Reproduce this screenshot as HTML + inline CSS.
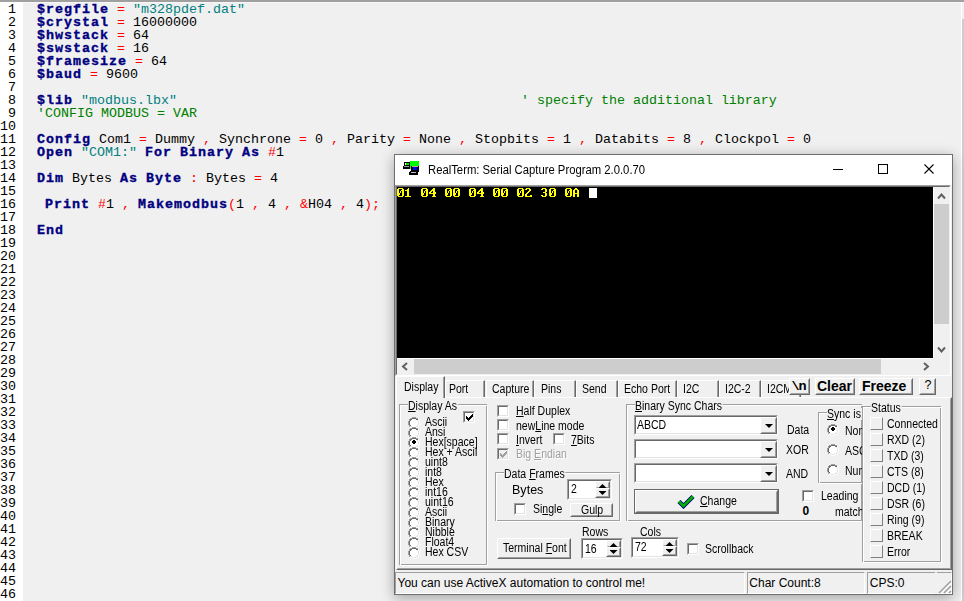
<!DOCTYPE html><html><head><meta charset="utf-8"><style>
*{margin:0;padding:0;box-sizing:border-box}
html,body{width:964px;height:601px;overflow:hidden;background:#f0f0f0;position:relative}
body>div{position:absolute}
.ln{left:0;width:16px;text-align:right;font:400 13.333px/13px 'Liberation Mono', monospace;color:#000;white-space:pre}
.cd{left:37px;font:400 13.333px/13px 'Liberation Mono', monospace;color:#000;white-space:pre}
.cd b{color:#000080;font-weight:700;letter-spacing:1px;-webkit-text-stroke:0.35px #000080}
.cd i{font-style:normal}
u{text-decoration:underline;text-underline-offset:1px}
.s{color:#008080} .c{color:#008000} .o{color:#ff0000}
</style></head><body>
<div style="left:0px;top:0px;width:964px;height:2px;background:#a0a0a0"></div>
<div style="left:0px;top:2px;width:964px;height:1px;background:#f7f7f7"></div>
<div style="left:0px;top:2px;width:23px;height:599px;background:#fff"></div>
<div style="left:961px;top:2px;width:1px;height:599px;background:#fff"></div>
<div style="left:962px;top:3px;width:2px;height:16px;background:#f0f0f0"></div>
<div style="left:962px;top:19px;width:2px;height:582px;background:#cdcdcd"></div>
<div class="ln" style="top:3px">1</div>
<div class="ln" style="top:16px">2</div>
<div class="ln" style="top:29px">3</div>
<div class="ln" style="top:42px">4</div>
<div class="ln" style="top:55px">5</div>
<div class="ln" style="top:68px">6</div>
<div class="ln" style="top:81px">7</div>
<div class="ln" style="top:94px">8</div>
<div class="ln" style="top:107px">9</div>
<div class="ln" style="top:120px">10</div>
<div class="ln" style="top:133px">11</div>
<div class="ln" style="top:146px">12</div>
<div class="ln" style="top:159px">13</div>
<div class="ln" style="top:172px">14</div>
<div class="ln" style="top:185px">15</div>
<div class="ln" style="top:198px">16</div>
<div class="ln" style="top:211px">17</div>
<div class="ln" style="top:224px">18</div>
<div class="ln" style="top:237px">19</div>
<div class="ln" style="top:250px">20</div>
<div class="ln" style="top:263px">21</div>
<div class="ln" style="top:276px">22</div>
<div class="ln" style="top:289px">23</div>
<div class="ln" style="top:302px">24</div>
<div class="ln" style="top:315px">25</div>
<div class="ln" style="top:328px">26</div>
<div class="ln" style="top:341px">27</div>
<div class="ln" style="top:354px">28</div>
<div class="ln" style="top:367px">29</div>
<div class="ln" style="top:380px">30</div>
<div class="ln" style="top:393px">31</div>
<div class="ln" style="top:406px">32</div>
<div class="ln" style="top:419px">33</div>
<div class="ln" style="top:432px">34</div>
<div class="ln" style="top:445px">35</div>
<div class="ln" style="top:458px">36</div>
<div class="ln" style="top:471px">37</div>
<div class="ln" style="top:484px">38</div>
<div class="ln" style="top:497px">39</div>
<div class="ln" style="top:510px">40</div>
<div class="ln" style="top:523px">41</div>
<div class="ln" style="top:536px">42</div>
<div class="ln" style="top:549px">43</div>
<div class="ln" style="top:562px">44</div>
<div class="ln" style="top:575px">45</div>
<div class="ln" style="top:588px">46</div>
<div class="cd" style="top:3px"><b>$regfile</b> <i class="o">=</i> <i class="s">"m328pdef.dat"</i></div>
<div class="cd" style="top:16px"><b>$crystal</b> <i class="o">=</i> 16000000</div>
<div class="cd" style="top:29px"><b>$hwstack</b> <i class="o">=</i> 64</div>
<div class="cd" style="top:42px"><b>$swstack</b> <i class="o">=</i> 16</div>
<div class="cd" style="top:55px"><b>$framesize</b> <i class="o">=</i> 64</div>
<div class="cd" style="top:68px"><b>$baud</b> <i class="o">=</i> 9600</div>
<div class="cd" style="top:94px"><b>$lib</b> <i class="s">"modbus.lbx"</i>                                           <i class="c">' specify the additional library</i></div>
<div class="cd" style="top:107px"><i class="c">'CONFIG MODBUS = VAR</i></div>
<div class="cd" style="top:133px"><b>Config</b> Com1 <i class="o">=</i> Dummy <i class="o">,</i> Synchrone <i class="o">=</i> 0 <i class="o">,</i> Parity <i class="o">=</i> None <i class="o">,</i> Stopbits <i class="o">=</i> 1 <i class="o">,</i> Databits <i class="o">=</i> 8 <i class="o">,</i> Clockpol <i class="o">=</i> 0</div>
<div class="cd" style="top:146px"><b>Open</b> <i class="s">"COM1:"</i> <b>For</b> <b>Binary</b> <b>As</b> <i class="o">#</i>1</div>
<div class="cd" style="top:172px"><b>Dim</b> Bytes <b>As</b> <b>Byte</b> <i class="o">:</i> Bytes <i class="o">=</i> 4</div>
<div class="cd" style="top:198px"> <b>Print</b> <i class="o">#</i>1 <i class="o">,</i> <b>Makemodbus</b><i class="o">(</i>1 <i class="o">,</i> 4 <i class="o">,</i> <i class="o">&amp;</i>H04 <i class="o">,</i> 4<i class="o">);</i></div>
<div class="cd" style="top:224px"><b>End</b></div>
<div style="left:394px;top:154px;width:559px;height:441px;border:1px solid #6f6f6f;background:#f0f0f0;box-shadow:0 3px 13px rgba(0,0,0,.33)"></div>
<div style="left:395px;top:155px;width:557px;height:30px;background:#fff"></div>
<svg style="position:absolute;left:401px;top:159px;shape-rendering:crispEdges" width="20" height="18" viewBox="0 0 20 18"><rect x="3" y="3" width="6" height="4" fill="#000"/><rect x="2" y="7" width="7" height="3" fill="#000"/><rect x="4" y="4" width="1" height="2" fill="#fff"/><rect x="5" y="4" width="3" height="2" fill="#00e000"/><rect x="3" y="7" width="5" height="1" fill="#a0a0a0"/><rect x="9" y="2" width="9" height="5" fill="#00ff00"/><rect x="9" y="7" width="1" height="3" fill="#00ff00"/><rect x="10" y="7" width="8" height="6" fill="#000"/><rect x="11" y="7" width="6" height="1" fill="#c0a0a0"/><rect x="12" y="8" width="4" height="3" fill="#0000ff"/><rect x="8" y="13" width="9" height="3" fill="#000"/><rect x="9" y="12" width="8" height="1" fill="#000"/><rect x="10" y="13" width="5" height="1" fill="#c0c0c0"/></svg>
<div style="left:427.8px;top:163.97px;font:400 12.5px/12.5px 'Liberation Sans', sans-serif;color:#000;white-space:pre;transform:scaleX(0.903);transform-origin:0 0">RealTerm: Serial Capture Program 2.0.0.70</div>
<div style="left:833px;top:169px;width:10px;height:1px;background:#000"></div>
<div style="left:878px;top:164px;width:10px;height:10px;border:1px solid #000"></div>
<svg style="position:absolute;left:924px;top:164px;" width="10" height="10" viewBox="0 0 10 10"><path d="M0.5 0.5L9.5 9.5M9.5 0.5L0.5 9.5" stroke="#000" stroke-width="1.1"/></svg>
<div style="left:395px;top:185px;width:556px;height:191px;border-style:solid;border-width:1px;border-color:#a0a0a0 #fff #fff #a0a0a0"></div>
<div style="left:396px;top:186px;width:554px;height:189px;border-style:solid;border-width:1px;border-color:#696969 #f0f0f0 #f0f0f0 #696969"></div>
<div style="left:397px;top:187px;width:536px;height:171px;background:#000"></div>
<div style="left:933px;top:187px;width:1px;height:171px;background:#fff"></div>
<div style="left:934px;top:204px;width:15px;height:120px;background:#cdcdcd"></div>
<svg style="position:absolute;left:937px;top:192px;" width="9" height="8" viewBox="0 0 9 8"><path d="M1 6.5L4.5 2.5L8 6.5" fill="none" stroke="#606060" stroke-width="2"/></svg>
<svg style="position:absolute;left:937px;top:346px;" width="9" height="8" viewBox="0 0 9 8"><path d="M1 1.5L4.5 5.5L8 1.5" fill="none" stroke="#606060" stroke-width="2"/></svg>
<div style="left:397px;top:358px;width:536px;height:1px;background:#fff"></div>
<div style="left:414px;top:359px;width:467px;height:15px;background:#cdcdcd"></div>
<svg style="position:absolute;left:401px;top:362px;" width="8" height="9" viewBox="0 0 8 9"><path d="M6 1L2 4.5L6 8" fill="none" stroke="#606060" stroke-width="2"/></svg>
<svg style="position:absolute;left:922px;top:362px;" width="8" height="9" viewBox="0 0 8 9"><path d="M2 1L6 4.5L2 8" fill="none" stroke="#606060" stroke-width="2"/></svg>
<svg style="position:absolute;left:397px;top:188px;shape-rendering:crispEdges" width="184" height="9" viewBox="0 0 184 9"><g transform="translate(0,0)"><rect x="1" y="0" width="5" height="1" fill="#ffff00"/><rect x="0" y="1" width="2" height="1" fill="#ffff00"/><rect x="5" y="1" width="2" height="1" fill="#ffff00"/><rect x="0" y="2" width="2" height="1" fill="#ffff00"/><rect x="4" y="2" width="3" height="1" fill="#ffff00"/><rect x="0" y="3" width="2" height="1" fill="#ffff00"/><rect x="3" y="3" width="1" height="1" fill="#ffff00"/><rect x="5" y="3" width="2" height="1" fill="#ffff00"/><rect x="0" y="4" width="2" height="1" fill="#ffff00"/><rect x="3" y="4" width="1" height="1" fill="#ffff00"/><rect x="5" y="4" width="2" height="1" fill="#ffff00"/><rect x="0" y="5" width="3" height="1" fill="#ffff00"/><rect x="5" y="5" width="2" height="1" fill="#ffff00"/><rect x="0" y="6" width="3" height="1" fill="#ffff00"/><rect x="5" y="6" width="2" height="1" fill="#ffff00"/><rect x="0" y="7" width="2" height="1" fill="#ffff00"/><rect x="5" y="7" width="2" height="1" fill="#ffff00"/><rect x="1" y="8" width="5" height="1" fill="#ffff00"/></g><g transform="translate(8,0)"><rect x="3" y="0" width="1" height="1" fill="#ffff00"/><rect x="2" y="1" width="2" height="1" fill="#ffff00"/><rect x="0" y="2" width="4" height="1" fill="#ffff00"/><rect x="2" y="3" width="2" height="1" fill="#ffff00"/><rect x="2" y="4" width="2" height="1" fill="#ffff00"/><rect x="2" y="5" width="2" height="1" fill="#ffff00"/><rect x="2" y="6" width="2" height="1" fill="#ffff00"/><rect x="2" y="7" width="2" height="1" fill="#ffff00"/><rect x="0" y="8" width="6" height="1" fill="#ffff00"/></g><g transform="translate(24,0)"><rect x="1" y="0" width="5" height="1" fill="#ffff00"/><rect x="0" y="1" width="2" height="1" fill="#ffff00"/><rect x="5" y="1" width="2" height="1" fill="#ffff00"/><rect x="0" y="2" width="2" height="1" fill="#ffff00"/><rect x="4" y="2" width="3" height="1" fill="#ffff00"/><rect x="0" y="3" width="2" height="1" fill="#ffff00"/><rect x="3" y="3" width="1" height="1" fill="#ffff00"/><rect x="5" y="3" width="2" height="1" fill="#ffff00"/><rect x="0" y="4" width="2" height="1" fill="#ffff00"/><rect x="3" y="4" width="1" height="1" fill="#ffff00"/><rect x="5" y="4" width="2" height="1" fill="#ffff00"/><rect x="0" y="5" width="3" height="1" fill="#ffff00"/><rect x="5" y="5" width="2" height="1" fill="#ffff00"/><rect x="0" y="6" width="3" height="1" fill="#ffff00"/><rect x="5" y="6" width="2" height="1" fill="#ffff00"/><rect x="0" y="7" width="2" height="1" fill="#ffff00"/><rect x="5" y="7" width="2" height="1" fill="#ffff00"/><rect x="1" y="8" width="5" height="1" fill="#ffff00"/></g><g transform="translate(32,0)"><rect x="4" y="0" width="2" height="1" fill="#ffff00"/><rect x="3" y="1" width="3" height="1" fill="#ffff00"/><rect x="2" y="2" width="4" height="1" fill="#ffff00"/><rect x="1" y="3" width="2" height="1" fill="#ffff00"/><rect x="4" y="3" width="2" height="1" fill="#ffff00"/><rect x="0" y="4" width="2" height="1" fill="#ffff00"/><rect x="4" y="4" width="3" height="1" fill="#ffff00"/><rect x="0" y="5" width="7" height="1" fill="#ffff00"/><rect x="4" y="6" width="2" height="1" fill="#ffff00"/><rect x="4" y="7" width="2" height="1" fill="#ffff00"/><rect x="3" y="8" width="4" height="1" fill="#ffff00"/></g><g transform="translate(48,0)"><rect x="1" y="0" width="5" height="1" fill="#ffff00"/><rect x="0" y="1" width="2" height="1" fill="#ffff00"/><rect x="5" y="1" width="2" height="1" fill="#ffff00"/><rect x="0" y="2" width="2" height="1" fill="#ffff00"/><rect x="4" y="2" width="3" height="1" fill="#ffff00"/><rect x="0" y="3" width="2" height="1" fill="#ffff00"/><rect x="3" y="3" width="1" height="1" fill="#ffff00"/><rect x="5" y="3" width="2" height="1" fill="#ffff00"/><rect x="0" y="4" width="2" height="1" fill="#ffff00"/><rect x="3" y="4" width="1" height="1" fill="#ffff00"/><rect x="5" y="4" width="2" height="1" fill="#ffff00"/><rect x="0" y="5" width="3" height="1" fill="#ffff00"/><rect x="5" y="5" width="2" height="1" fill="#ffff00"/><rect x="0" y="6" width="3" height="1" fill="#ffff00"/><rect x="5" y="6" width="2" height="1" fill="#ffff00"/><rect x="0" y="7" width="2" height="1" fill="#ffff00"/><rect x="5" y="7" width="2" height="1" fill="#ffff00"/><rect x="1" y="8" width="5" height="1" fill="#ffff00"/></g><g transform="translate(56,0)"><rect x="1" y="0" width="5" height="1" fill="#ffff00"/><rect x="0" y="1" width="2" height="1" fill="#ffff00"/><rect x="5" y="1" width="2" height="1" fill="#ffff00"/><rect x="0" y="2" width="2" height="1" fill="#ffff00"/><rect x="4" y="2" width="3" height="1" fill="#ffff00"/><rect x="0" y="3" width="2" height="1" fill="#ffff00"/><rect x="3" y="3" width="1" height="1" fill="#ffff00"/><rect x="5" y="3" width="2" height="1" fill="#ffff00"/><rect x="0" y="4" width="2" height="1" fill="#ffff00"/><rect x="3" y="4" width="1" height="1" fill="#ffff00"/><rect x="5" y="4" width="2" height="1" fill="#ffff00"/><rect x="0" y="5" width="3" height="1" fill="#ffff00"/><rect x="5" y="5" width="2" height="1" fill="#ffff00"/><rect x="0" y="6" width="3" height="1" fill="#ffff00"/><rect x="5" y="6" width="2" height="1" fill="#ffff00"/><rect x="0" y="7" width="2" height="1" fill="#ffff00"/><rect x="5" y="7" width="2" height="1" fill="#ffff00"/><rect x="1" y="8" width="5" height="1" fill="#ffff00"/></g><g transform="translate(72,0)"><rect x="1" y="0" width="5" height="1" fill="#ffff00"/><rect x="0" y="1" width="2" height="1" fill="#ffff00"/><rect x="5" y="1" width="2" height="1" fill="#ffff00"/><rect x="0" y="2" width="2" height="1" fill="#ffff00"/><rect x="4" y="2" width="3" height="1" fill="#ffff00"/><rect x="0" y="3" width="2" height="1" fill="#ffff00"/><rect x="3" y="3" width="1" height="1" fill="#ffff00"/><rect x="5" y="3" width="2" height="1" fill="#ffff00"/><rect x="0" y="4" width="2" height="1" fill="#ffff00"/><rect x="3" y="4" width="1" height="1" fill="#ffff00"/><rect x="5" y="4" width="2" height="1" fill="#ffff00"/><rect x="0" y="5" width="3" height="1" fill="#ffff00"/><rect x="5" y="5" width="2" height="1" fill="#ffff00"/><rect x="0" y="6" width="3" height="1" fill="#ffff00"/><rect x="5" y="6" width="2" height="1" fill="#ffff00"/><rect x="0" y="7" width="2" height="1" fill="#ffff00"/><rect x="5" y="7" width="2" height="1" fill="#ffff00"/><rect x="1" y="8" width="5" height="1" fill="#ffff00"/></g><g transform="translate(80,0)"><rect x="4" y="0" width="2" height="1" fill="#ffff00"/><rect x="3" y="1" width="3" height="1" fill="#ffff00"/><rect x="2" y="2" width="4" height="1" fill="#ffff00"/><rect x="1" y="3" width="2" height="1" fill="#ffff00"/><rect x="4" y="3" width="2" height="1" fill="#ffff00"/><rect x="0" y="4" width="2" height="1" fill="#ffff00"/><rect x="4" y="4" width="3" height="1" fill="#ffff00"/><rect x="0" y="5" width="7" height="1" fill="#ffff00"/><rect x="4" y="6" width="2" height="1" fill="#ffff00"/><rect x="4" y="7" width="2" height="1" fill="#ffff00"/><rect x="3" y="8" width="4" height="1" fill="#ffff00"/></g><g transform="translate(96,0)"><rect x="1" y="0" width="5" height="1" fill="#ffff00"/><rect x="0" y="1" width="2" height="1" fill="#ffff00"/><rect x="5" y="1" width="2" height="1" fill="#ffff00"/><rect x="0" y="2" width="2" height="1" fill="#ffff00"/><rect x="4" y="2" width="3" height="1" fill="#ffff00"/><rect x="0" y="3" width="2" height="1" fill="#ffff00"/><rect x="3" y="3" width="1" height="1" fill="#ffff00"/><rect x="5" y="3" width="2" height="1" fill="#ffff00"/><rect x="0" y="4" width="2" height="1" fill="#ffff00"/><rect x="3" y="4" width="1" height="1" fill="#ffff00"/><rect x="5" y="4" width="2" height="1" fill="#ffff00"/><rect x="0" y="5" width="3" height="1" fill="#ffff00"/><rect x="5" y="5" width="2" height="1" fill="#ffff00"/><rect x="0" y="6" width="3" height="1" fill="#ffff00"/><rect x="5" y="6" width="2" height="1" fill="#ffff00"/><rect x="0" y="7" width="2" height="1" fill="#ffff00"/><rect x="5" y="7" width="2" height="1" fill="#ffff00"/><rect x="1" y="8" width="5" height="1" fill="#ffff00"/></g><g transform="translate(104,0)"><rect x="1" y="0" width="5" height="1" fill="#ffff00"/><rect x="0" y="1" width="2" height="1" fill="#ffff00"/><rect x="5" y="1" width="2" height="1" fill="#ffff00"/><rect x="0" y="2" width="2" height="1" fill="#ffff00"/><rect x="4" y="2" width="3" height="1" fill="#ffff00"/><rect x="0" y="3" width="2" height="1" fill="#ffff00"/><rect x="3" y="3" width="1" height="1" fill="#ffff00"/><rect x="5" y="3" width="2" height="1" fill="#ffff00"/><rect x="0" y="4" width="2" height="1" fill="#ffff00"/><rect x="3" y="4" width="1" height="1" fill="#ffff00"/><rect x="5" y="4" width="2" height="1" fill="#ffff00"/><rect x="0" y="5" width="3" height="1" fill="#ffff00"/><rect x="5" y="5" width="2" height="1" fill="#ffff00"/><rect x="0" y="6" width="3" height="1" fill="#ffff00"/><rect x="5" y="6" width="2" height="1" fill="#ffff00"/><rect x="0" y="7" width="2" height="1" fill="#ffff00"/><rect x="5" y="7" width="2" height="1" fill="#ffff00"/><rect x="1" y="8" width="5" height="1" fill="#ffff00"/></g><g transform="translate(120,0)"><rect x="1" y="0" width="5" height="1" fill="#ffff00"/><rect x="0" y="1" width="2" height="1" fill="#ffff00"/><rect x="5" y="1" width="2" height="1" fill="#ffff00"/><rect x="0" y="2" width="2" height="1" fill="#ffff00"/><rect x="4" y="2" width="3" height="1" fill="#ffff00"/><rect x="0" y="3" width="2" height="1" fill="#ffff00"/><rect x="3" y="3" width="1" height="1" fill="#ffff00"/><rect x="5" y="3" width="2" height="1" fill="#ffff00"/><rect x="0" y="4" width="2" height="1" fill="#ffff00"/><rect x="3" y="4" width="1" height="1" fill="#ffff00"/><rect x="5" y="4" width="2" height="1" fill="#ffff00"/><rect x="0" y="5" width="3" height="1" fill="#ffff00"/><rect x="5" y="5" width="2" height="1" fill="#ffff00"/><rect x="0" y="6" width="3" height="1" fill="#ffff00"/><rect x="5" y="6" width="2" height="1" fill="#ffff00"/><rect x="0" y="7" width="2" height="1" fill="#ffff00"/><rect x="5" y="7" width="2" height="1" fill="#ffff00"/><rect x="1" y="8" width="5" height="1" fill="#ffff00"/></g><g transform="translate(128,0)"><rect x="1" y="0" width="4" height="1" fill="#ffff00"/><rect x="0" y="1" width="2" height="1" fill="#ffff00"/><rect x="4" y="1" width="2" height="1" fill="#ffff00"/><rect x="4" y="2" width="2" height="1" fill="#ffff00"/><rect x="3" y="3" width="2" height="1" fill="#ffff00"/><rect x="2" y="4" width="2" height="1" fill="#ffff00"/><rect x="1" y="5" width="2" height="1" fill="#ffff00"/><rect x="0" y="6" width="2" height="1" fill="#ffff00"/><rect x="0" y="7" width="2" height="1" fill="#ffff00"/><rect x="5" y="7" width="2" height="1" fill="#ffff00"/><rect x="0" y="8" width="7" height="1" fill="#ffff00"/></g><g transform="translate(144,0)"><rect x="1" y="0" width="4" height="1" fill="#ffff00"/><rect x="0" y="1" width="2" height="1" fill="#ffff00"/><rect x="4" y="1" width="2" height="1" fill="#ffff00"/><rect x="4" y="2" width="2" height="1" fill="#ffff00"/><rect x="4" y="3" width="2" height="1" fill="#ffff00"/><rect x="2" y="4" width="3" height="1" fill="#ffff00"/><rect x="4" y="5" width="2" height="1" fill="#ffff00"/><rect x="4" y="6" width="2" height="1" fill="#ffff00"/><rect x="0" y="7" width="2" height="1" fill="#ffff00"/><rect x="4" y="7" width="2" height="1" fill="#ffff00"/><rect x="1" y="8" width="4" height="1" fill="#ffff00"/></g><g transform="translate(152,0)"><rect x="1" y="0" width="5" height="1" fill="#ffff00"/><rect x="0" y="1" width="2" height="1" fill="#ffff00"/><rect x="5" y="1" width="2" height="1" fill="#ffff00"/><rect x="0" y="2" width="2" height="1" fill="#ffff00"/><rect x="4" y="2" width="3" height="1" fill="#ffff00"/><rect x="0" y="3" width="2" height="1" fill="#ffff00"/><rect x="3" y="3" width="1" height="1" fill="#ffff00"/><rect x="5" y="3" width="2" height="1" fill="#ffff00"/><rect x="0" y="4" width="2" height="1" fill="#ffff00"/><rect x="3" y="4" width="1" height="1" fill="#ffff00"/><rect x="5" y="4" width="2" height="1" fill="#ffff00"/><rect x="0" y="5" width="3" height="1" fill="#ffff00"/><rect x="5" y="5" width="2" height="1" fill="#ffff00"/><rect x="0" y="6" width="3" height="1" fill="#ffff00"/><rect x="5" y="6" width="2" height="1" fill="#ffff00"/><rect x="0" y="7" width="2" height="1" fill="#ffff00"/><rect x="5" y="7" width="2" height="1" fill="#ffff00"/><rect x="1" y="8" width="5" height="1" fill="#ffff00"/></g><g transform="translate(168,0)"><rect x="1" y="0" width="5" height="1" fill="#ffff00"/><rect x="0" y="1" width="2" height="1" fill="#ffff00"/><rect x="5" y="1" width="2" height="1" fill="#ffff00"/><rect x="0" y="2" width="2" height="1" fill="#ffff00"/><rect x="4" y="2" width="3" height="1" fill="#ffff00"/><rect x="0" y="3" width="2" height="1" fill="#ffff00"/><rect x="3" y="3" width="1" height="1" fill="#ffff00"/><rect x="5" y="3" width="2" height="1" fill="#ffff00"/><rect x="0" y="4" width="2" height="1" fill="#ffff00"/><rect x="3" y="4" width="1" height="1" fill="#ffff00"/><rect x="5" y="4" width="2" height="1" fill="#ffff00"/><rect x="0" y="5" width="3" height="1" fill="#ffff00"/><rect x="5" y="5" width="2" height="1" fill="#ffff00"/><rect x="0" y="6" width="3" height="1" fill="#ffff00"/><rect x="5" y="6" width="2" height="1" fill="#ffff00"/><rect x="0" y="7" width="2" height="1" fill="#ffff00"/><rect x="5" y="7" width="2" height="1" fill="#ffff00"/><rect x="1" y="8" width="5" height="1" fill="#ffff00"/></g><g transform="translate(176,0)"><rect x="2" y="0" width="2" height="1" fill="#ffff00"/><rect x="1" y="1" width="4" height="1" fill="#ffff00"/><rect x="0" y="2" width="2" height="1" fill="#ffff00"/><rect x="4" y="2" width="2" height="1" fill="#ffff00"/><rect x="0" y="3" width="2" height="1" fill="#ffff00"/><rect x="4" y="3" width="2" height="1" fill="#ffff00"/><rect x="0" y="4" width="2" height="1" fill="#ffff00"/><rect x="4" y="4" width="2" height="1" fill="#ffff00"/><rect x="0" y="5" width="6" height="1" fill="#ffff00"/><rect x="0" y="6" width="2" height="1" fill="#ffff00"/><rect x="4" y="6" width="2" height="1" fill="#ffff00"/><rect x="0" y="7" width="2" height="1" fill="#ffff00"/><rect x="4" y="7" width="2" height="1" fill="#ffff00"/><rect x="0" y="8" width="2" height="1" fill="#ffff00"/><rect x="4" y="8" width="2" height="1" fill="#ffff00"/></g></svg>
<div style="left:589px;top:188px;width:8px;height:10px;background:#fff"></div>
<div style="left:396px;top:397px;width:556px;height:173px;border-style:solid;border-width:1px;border-color:#fff #696969 #696969 #fff"></div>
<div style="left:397px;top:398px;width:554px;height:171px;border-style:solid;border-width:1px;border-color:#f0f0f0 #a0a0a0 #a0a0a0 #f0f0f0"></div>
<div style="left:445px;top:380px;width:40px;height:17px;background:#f0f0f0;border-style:solid;border-width:1px 1px 0 1px;border-color:#fff #696969 #fff #fff"></div>
<div style="left:483px;top:381px;width:1px;height:16px;background:#a0a0a0"></div>
<div style="left:449.4px;top:383.44px;font:400 12px/12px 'Liberation Sans', sans-serif;color:#000;white-space:pre;transform:scaleX(0.876);transform-origin:0 0;">Port</div>
<div style="left:486px;top:380px;width:48px;height:17px;background:#f0f0f0;border-style:solid;border-width:1px 1px 0 1px;border-color:#fff #696969 #fff #fff"></div>
<div style="left:532px;top:381px;width:1px;height:16px;background:#a0a0a0"></div>
<div style="left:491.6px;top:383.44px;font:400 12px/12px 'Liberation Sans', sans-serif;color:#000;white-space:pre;transform:scaleX(0.876);transform-origin:0 0;">Capture</div>
<div style="left:534px;top:380px;width:42px;height:17px;background:#f0f0f0;border-style:solid;border-width:1px 1px 0 1px;border-color:#fff #696969 #fff #fff"></div>
<div style="left:574px;top:381px;width:1px;height:16px;background:#a0a0a0"></div>
<div style="left:540.7px;top:383.44px;font:400 12px/12px 'Liberation Sans', sans-serif;color:#000;white-space:pre;transform:scaleX(0.876);transform-origin:0 0;">Pins</div>
<div style="left:576px;top:380px;width:42px;height:17px;background:#f0f0f0;border-style:solid;border-width:1px 1px 0 1px;border-color:#fff #696969 #fff #fff"></div>
<div style="left:616px;top:381px;width:1px;height:16px;background:#a0a0a0"></div>
<div style="left:582.4px;top:383.44px;font:400 12px/12px 'Liberation Sans', sans-serif;color:#000;white-space:pre;transform:scaleX(0.876);transform-origin:0 0;">Send</div>
<div style="left:618px;top:380px;width:59px;height:17px;background:#f0f0f0;border-style:solid;border-width:1px 1px 0 1px;border-color:#fff #696969 #fff #fff"></div>
<div style="left:675px;top:381px;width:1px;height:16px;background:#a0a0a0"></div>
<div style="left:624px;top:383.44px;font:400 12px/12px 'Liberation Sans', sans-serif;color:#000;white-space:pre;transform:scaleX(0.876);transform-origin:0 0;">Echo Port</div>
<div style="left:677px;top:380px;width:42px;height:17px;background:#f0f0f0;border-style:solid;border-width:1px 1px 0 1px;border-color:#fff #696969 #fff #fff"></div>
<div style="left:717px;top:381px;width:1px;height:16px;background:#a0a0a0"></div>
<div style="left:683px;top:383.44px;font:400 12px/12px 'Liberation Sans', sans-serif;color:#000;white-space:pre;transform:scaleX(0.876);transform-origin:0 0;">I2C</div>
<div style="left:719px;top:380px;width:42px;height:17px;background:#f0f0f0;border-style:solid;border-width:1px 1px 0 1px;border-color:#fff #696969 #fff #fff"></div>
<div style="left:759px;top:381px;width:1px;height:16px;background:#a0a0a0"></div>
<div style="left:724.8px;top:383.44px;font:400 12px/12px 'Liberation Sans', sans-serif;color:#000;white-space:pre;transform:scaleX(0.876);transform-origin:0 0;">I2C-2</div>
<div style="left:761px;top:380px;width:40px;height:17px;background:#f0f0f0;border-style:solid;border-width:1px 1px 0 1px;border-color:#fff #696969 #fff #fff"></div>
<div style="left:799px;top:381px;width:1px;height:16px;background:#a0a0a0"></div>
<div style="left:767.3px;top:383.44px;font:400 12px/12px 'Liberation Sans', sans-serif;color:#000;white-space:pre;transform:scaleX(0.876);transform-origin:0 0;">I2CMisc</div>
<div style="left:396px;top:376px;width:49px;height:22px;background:#f0f0f0;border-style:solid;border-width:1px 1px 0 1px;border-color:#fff #696969 #fff #fff"></div>
<div style="left:443px;top:377px;width:1px;height:21px;background:#a0a0a0"></div>
<div style="left:403.5px;top:381.44px;font:400 12px/12px 'Liberation Sans', sans-serif;color:#000;white-space:pre;transform:scaleX(0.876);transform-origin:0 0;">Display</div>
<div style="left:789px;top:378px;width:21px;height:17px;background:#f0f0f0;border-style:solid;border-width:1px;border-color:#fff #696969 #696969 #fff"></div>
<div style="left:790px;top:379px;width:19px;height:15px;border-style:solid;border-width:1px;border-color:#f0f0f0 #a0a0a0 #a0a0a0 #f0f0f0"></div>
<div style="left:791.5px;top:378px;font:700 13.5px/17px 'Liberation Mono', monospace;letter-spacing:-1px;white-space:pre">\n</div>
<div style="left:815px;top:378px;width:40px;height:17px;background:#f0f0f0;border-style:solid;border-width:1px;border-color:#fff #696969 #696969 #fff"></div>
<div style="left:816px;top:379px;width:38px;height:15px;border-style:solid;border-width:1px;border-color:#f0f0f0 #a0a0a0 #a0a0a0 #f0f0f0"></div>
<div style="left:817px;top:379.18px;font:700 14px/14px 'Liberation Sans', sans-serif;color:#000;white-space:pre;">Clear</div>
<div style="left:859px;top:378px;width:54px;height:17px;background:#f0f0f0;border-style:solid;border-width:1px;border-color:#fff #696969 #696969 #fff"></div>
<div style="left:860px;top:379px;width:52px;height:15px;border-style:solid;border-width:1px;border-color:#f0f0f0 #a0a0a0 #a0a0a0 #f0f0f0"></div>
<div style="left:862px;top:379.18px;font:700 14px/14px 'Liberation Sans', sans-serif;color:#000;white-space:pre;">Freeze</div>
<div style="left:919px;top:378px;width:17px;height:17px;background:#f0f0f0;border-style:solid;border-width:1px;border-color:#fff #696969 #696969 #fff"></div>
<div style="left:920px;top:379px;width:15px;height:15px;border-style:solid;border-width:1px;border-color:#f0f0f0 #a0a0a0 #a0a0a0 #f0f0f0"></div>
<div style="left:924.5px;top:379.38px;font:400 12.5px/12.5px 'Liberation Sans', sans-serif;color:#000;white-space:pre;">?</div>
<div style="left:399px;top:404px;width:88px;height:161px;border:1px solid #a0a0a0"></div>
<div style="left:400px;top:405px;width:88px;height:161px;border:1px solid #fff"></div>
<div style="left:407.5px;top:400.44px;font:400 12px/12px 'Liberation Sans', sans-serif;color:#000;white-space:pre;transform:scaleX(0.876);transform-origin:0 0;background:#f0f0f0;padding:0 1px 0 0"><u>D</u>isplay As</div>
<div style="left:463px;top:411px;width:12px;height:12px;background:#fff;border-style:solid;border-width:1px;border-color:#a0a0a0 #fff #fff #a0a0a0"></div>
<div style="left:464px;top:412px;width:10px;height:10px;border-style:solid;border-width:1px;border-color:#696969 #e3e3e3 #e3e3e3 #696969"></div>
<svg style="position:absolute;left:466px;top:414px;shape-rendering:crispEdges" width="7" height="7" viewBox="0 0 7 7"><rect x="6" y="0" width="1" height="1" fill="#000"/><rect x="5" y="1" width="2" height="1" fill="#000"/><rect x="0" y="2" width="1" height="1" fill="#000"/><rect x="4" y="2" width="3" height="1" fill="#000"/><rect x="0" y="3" width="2" height="1" fill="#000"/><rect x="3" y="3" width="3" height="1" fill="#000"/><rect x="0" y="4" width="5" height="1" fill="#000"/><rect x="1" y="5" width="3" height="1" fill="#000"/><rect x="2" y="6" width="1" height="1" fill="#000"/></svg>
<svg style="position:absolute;left:408px;top:417px;shape-rendering:crispEdges" width="12" height="12" viewBox="0 0 12 12"><rect x="4" y="2" width="4" height="1" fill="#fff"/><rect x="3" y="3" width="6" height="1" fill="#fff"/><rect x="2" y="4" width="8" height="1" fill="#fff"/><rect x="2" y="5" width="8" height="1" fill="#fff"/><rect x="2" y="6" width="8" height="1" fill="#fff"/><rect x="2" y="7" width="8" height="1" fill="#fff"/><rect x="3" y="8" width="6" height="1" fill="#fff"/><rect x="4" y="9" width="4" height="1" fill="#fff"/><rect x="4" y="0" width="4" height="1" fill="#a0a0a0"/><rect x="2" y="1" width="2" height="1" fill="#a0a0a0"/><rect x="8" y="1" width="2" height="1" fill="#a0a0a0"/><rect x="1" y="2" width="1" height="1" fill="#a0a0a0"/><rect x="1" y="3" width="1" height="1" fill="#a0a0a0"/><rect x="0" y="4" width="1" height="1" fill="#a0a0a0"/><rect x="0" y="5" width="1" height="1" fill="#a0a0a0"/><rect x="0" y="6" width="1" height="1" fill="#a0a0a0"/><rect x="0" y="7" width="1" height="1" fill="#a0a0a0"/><rect x="1" y="8" width="1" height="1" fill="#a0a0a0"/><rect x="1" y="9" width="1" height="1" fill="#a0a0a0"/><rect x="4" y="1" width="4" height="1" fill="#696969"/><rect x="2" y="2" width="2" height="1" fill="#696969"/><rect x="8" y="2" width="2" height="1" fill="#696969"/><rect x="2" y="3" width="1" height="1" fill="#696969"/><rect x="1" y="4" width="1" height="1" fill="#696969"/><rect x="1" y="5" width="1" height="1" fill="#696969"/><rect x="1" y="6" width="1" height="1" fill="#696969"/><rect x="1" y="7" width="1" height="1" fill="#696969"/><rect x="2" y="8" width="1" height="1" fill="#696969"/><rect x="10" y="2" width="1" height="1" fill="#fff"/><rect x="10" y="3" width="1" height="1" fill="#fff"/><rect x="11" y="4" width="1" height="1" fill="#fff"/><rect x="11" y="5" width="1" height="1" fill="#fff"/><rect x="11" y="6" width="1" height="1" fill="#fff"/><rect x="11" y="7" width="1" height="1" fill="#fff"/><rect x="10" y="8" width="1" height="1" fill="#fff"/><rect x="10" y="9" width="1" height="1" fill="#fff"/><rect x="2" y="10" width="2" height="1" fill="#fff"/><rect x="8" y="10" width="2" height="1" fill="#fff"/><rect x="4" y="11" width="4" height="1" fill="#fff"/><rect x="9" y="3" width="1" height="1" fill="#e3e3e3"/><rect x="10" y="4" width="1" height="1" fill="#e3e3e3"/><rect x="10" y="5" width="1" height="1" fill="#e3e3e3"/><rect x="10" y="6" width="1" height="1" fill="#e3e3e3"/><rect x="10" y="7" width="1" height="1" fill="#e3e3e3"/><rect x="9" y="8" width="1" height="1" fill="#e3e3e3"/><rect x="2" y="9" width="2" height="1" fill="#e3e3e3"/><rect x="8" y="9" width="2" height="1" fill="#e3e3e3"/><rect x="4" y="10" width="4" height="1" fill="#e3e3e3"/></svg>
<svg style="position:absolute;left:408px;top:427px;shape-rendering:crispEdges" width="12" height="12" viewBox="0 0 12 12"><rect x="4" y="2" width="4" height="1" fill="#fff"/><rect x="3" y="3" width="6" height="1" fill="#fff"/><rect x="2" y="4" width="8" height="1" fill="#fff"/><rect x="2" y="5" width="8" height="1" fill="#fff"/><rect x="2" y="6" width="8" height="1" fill="#fff"/><rect x="2" y="7" width="8" height="1" fill="#fff"/><rect x="3" y="8" width="6" height="1" fill="#fff"/><rect x="4" y="9" width="4" height="1" fill="#fff"/><rect x="4" y="0" width="4" height="1" fill="#a0a0a0"/><rect x="2" y="1" width="2" height="1" fill="#a0a0a0"/><rect x="8" y="1" width="2" height="1" fill="#a0a0a0"/><rect x="1" y="2" width="1" height="1" fill="#a0a0a0"/><rect x="1" y="3" width="1" height="1" fill="#a0a0a0"/><rect x="0" y="4" width="1" height="1" fill="#a0a0a0"/><rect x="0" y="5" width="1" height="1" fill="#a0a0a0"/><rect x="0" y="6" width="1" height="1" fill="#a0a0a0"/><rect x="0" y="7" width="1" height="1" fill="#a0a0a0"/><rect x="1" y="8" width="1" height="1" fill="#a0a0a0"/><rect x="1" y="9" width="1" height="1" fill="#a0a0a0"/><rect x="4" y="1" width="4" height="1" fill="#696969"/><rect x="2" y="2" width="2" height="1" fill="#696969"/><rect x="8" y="2" width="2" height="1" fill="#696969"/><rect x="2" y="3" width="1" height="1" fill="#696969"/><rect x="1" y="4" width="1" height="1" fill="#696969"/><rect x="1" y="5" width="1" height="1" fill="#696969"/><rect x="1" y="6" width="1" height="1" fill="#696969"/><rect x="1" y="7" width="1" height="1" fill="#696969"/><rect x="2" y="8" width="1" height="1" fill="#696969"/><rect x="10" y="2" width="1" height="1" fill="#fff"/><rect x="10" y="3" width="1" height="1" fill="#fff"/><rect x="11" y="4" width="1" height="1" fill="#fff"/><rect x="11" y="5" width="1" height="1" fill="#fff"/><rect x="11" y="6" width="1" height="1" fill="#fff"/><rect x="11" y="7" width="1" height="1" fill="#fff"/><rect x="10" y="8" width="1" height="1" fill="#fff"/><rect x="10" y="9" width="1" height="1" fill="#fff"/><rect x="2" y="10" width="2" height="1" fill="#fff"/><rect x="8" y="10" width="2" height="1" fill="#fff"/><rect x="4" y="11" width="4" height="1" fill="#fff"/><rect x="9" y="3" width="1" height="1" fill="#e3e3e3"/><rect x="10" y="4" width="1" height="1" fill="#e3e3e3"/><rect x="10" y="5" width="1" height="1" fill="#e3e3e3"/><rect x="10" y="6" width="1" height="1" fill="#e3e3e3"/><rect x="10" y="7" width="1" height="1" fill="#e3e3e3"/><rect x="9" y="8" width="1" height="1" fill="#e3e3e3"/><rect x="2" y="9" width="2" height="1" fill="#e3e3e3"/><rect x="8" y="9" width="2" height="1" fill="#e3e3e3"/><rect x="4" y="10" width="4" height="1" fill="#e3e3e3"/></svg>
<svg style="position:absolute;left:408px;top:437px;shape-rendering:crispEdges" width="12" height="12" viewBox="0 0 12 12"><rect x="4" y="2" width="4" height="1" fill="#fff"/><rect x="3" y="3" width="6" height="1" fill="#fff"/><rect x="2" y="4" width="8" height="1" fill="#fff"/><rect x="2" y="5" width="8" height="1" fill="#fff"/><rect x="2" y="6" width="8" height="1" fill="#fff"/><rect x="2" y="7" width="8" height="1" fill="#fff"/><rect x="3" y="8" width="6" height="1" fill="#fff"/><rect x="4" y="9" width="4" height="1" fill="#fff"/><rect x="4" y="0" width="4" height="1" fill="#a0a0a0"/><rect x="2" y="1" width="2" height="1" fill="#a0a0a0"/><rect x="8" y="1" width="2" height="1" fill="#a0a0a0"/><rect x="1" y="2" width="1" height="1" fill="#a0a0a0"/><rect x="1" y="3" width="1" height="1" fill="#a0a0a0"/><rect x="0" y="4" width="1" height="1" fill="#a0a0a0"/><rect x="0" y="5" width="1" height="1" fill="#a0a0a0"/><rect x="0" y="6" width="1" height="1" fill="#a0a0a0"/><rect x="0" y="7" width="1" height="1" fill="#a0a0a0"/><rect x="1" y="8" width="1" height="1" fill="#a0a0a0"/><rect x="1" y="9" width="1" height="1" fill="#a0a0a0"/><rect x="4" y="1" width="4" height="1" fill="#696969"/><rect x="2" y="2" width="2" height="1" fill="#696969"/><rect x="8" y="2" width="2" height="1" fill="#696969"/><rect x="2" y="3" width="1" height="1" fill="#696969"/><rect x="1" y="4" width="1" height="1" fill="#696969"/><rect x="1" y="5" width="1" height="1" fill="#696969"/><rect x="1" y="6" width="1" height="1" fill="#696969"/><rect x="1" y="7" width="1" height="1" fill="#696969"/><rect x="2" y="8" width="1" height="1" fill="#696969"/><rect x="10" y="2" width="1" height="1" fill="#fff"/><rect x="10" y="3" width="1" height="1" fill="#fff"/><rect x="11" y="4" width="1" height="1" fill="#fff"/><rect x="11" y="5" width="1" height="1" fill="#fff"/><rect x="11" y="6" width="1" height="1" fill="#fff"/><rect x="11" y="7" width="1" height="1" fill="#fff"/><rect x="10" y="8" width="1" height="1" fill="#fff"/><rect x="10" y="9" width="1" height="1" fill="#fff"/><rect x="2" y="10" width="2" height="1" fill="#fff"/><rect x="8" y="10" width="2" height="1" fill="#fff"/><rect x="4" y="11" width="4" height="1" fill="#fff"/><rect x="9" y="3" width="1" height="1" fill="#e3e3e3"/><rect x="10" y="4" width="1" height="1" fill="#e3e3e3"/><rect x="10" y="5" width="1" height="1" fill="#e3e3e3"/><rect x="10" y="6" width="1" height="1" fill="#e3e3e3"/><rect x="10" y="7" width="1" height="1" fill="#e3e3e3"/><rect x="9" y="8" width="1" height="1" fill="#e3e3e3"/><rect x="2" y="9" width="2" height="1" fill="#e3e3e3"/><rect x="8" y="9" width="2" height="1" fill="#e3e3e3"/><rect x="4" y="10" width="4" height="1" fill="#e3e3e3"/><rect x="5" y="3" width="2" height="1" fill="#000"/><rect x="4" y="4" width="4" height="1" fill="#000"/><rect x="4" y="5" width="4" height="1" fill="#000"/><rect x="5" y="6" width="2" height="1" fill="#000"/></svg>
<svg style="position:absolute;left:408px;top:447px;shape-rendering:crispEdges" width="12" height="12" viewBox="0 0 12 12"><rect x="4" y="2" width="4" height="1" fill="#fff"/><rect x="3" y="3" width="6" height="1" fill="#fff"/><rect x="2" y="4" width="8" height="1" fill="#fff"/><rect x="2" y="5" width="8" height="1" fill="#fff"/><rect x="2" y="6" width="8" height="1" fill="#fff"/><rect x="2" y="7" width="8" height="1" fill="#fff"/><rect x="3" y="8" width="6" height="1" fill="#fff"/><rect x="4" y="9" width="4" height="1" fill="#fff"/><rect x="4" y="0" width="4" height="1" fill="#a0a0a0"/><rect x="2" y="1" width="2" height="1" fill="#a0a0a0"/><rect x="8" y="1" width="2" height="1" fill="#a0a0a0"/><rect x="1" y="2" width="1" height="1" fill="#a0a0a0"/><rect x="1" y="3" width="1" height="1" fill="#a0a0a0"/><rect x="0" y="4" width="1" height="1" fill="#a0a0a0"/><rect x="0" y="5" width="1" height="1" fill="#a0a0a0"/><rect x="0" y="6" width="1" height="1" fill="#a0a0a0"/><rect x="0" y="7" width="1" height="1" fill="#a0a0a0"/><rect x="1" y="8" width="1" height="1" fill="#a0a0a0"/><rect x="1" y="9" width="1" height="1" fill="#a0a0a0"/><rect x="4" y="1" width="4" height="1" fill="#696969"/><rect x="2" y="2" width="2" height="1" fill="#696969"/><rect x="8" y="2" width="2" height="1" fill="#696969"/><rect x="2" y="3" width="1" height="1" fill="#696969"/><rect x="1" y="4" width="1" height="1" fill="#696969"/><rect x="1" y="5" width="1" height="1" fill="#696969"/><rect x="1" y="6" width="1" height="1" fill="#696969"/><rect x="1" y="7" width="1" height="1" fill="#696969"/><rect x="2" y="8" width="1" height="1" fill="#696969"/><rect x="10" y="2" width="1" height="1" fill="#fff"/><rect x="10" y="3" width="1" height="1" fill="#fff"/><rect x="11" y="4" width="1" height="1" fill="#fff"/><rect x="11" y="5" width="1" height="1" fill="#fff"/><rect x="11" y="6" width="1" height="1" fill="#fff"/><rect x="11" y="7" width="1" height="1" fill="#fff"/><rect x="10" y="8" width="1" height="1" fill="#fff"/><rect x="10" y="9" width="1" height="1" fill="#fff"/><rect x="2" y="10" width="2" height="1" fill="#fff"/><rect x="8" y="10" width="2" height="1" fill="#fff"/><rect x="4" y="11" width="4" height="1" fill="#fff"/><rect x="9" y="3" width="1" height="1" fill="#e3e3e3"/><rect x="10" y="4" width="1" height="1" fill="#e3e3e3"/><rect x="10" y="5" width="1" height="1" fill="#e3e3e3"/><rect x="10" y="6" width="1" height="1" fill="#e3e3e3"/><rect x="10" y="7" width="1" height="1" fill="#e3e3e3"/><rect x="9" y="8" width="1" height="1" fill="#e3e3e3"/><rect x="2" y="9" width="2" height="1" fill="#e3e3e3"/><rect x="8" y="9" width="2" height="1" fill="#e3e3e3"/><rect x="4" y="10" width="4" height="1" fill="#e3e3e3"/></svg>
<svg style="position:absolute;left:408px;top:457px;shape-rendering:crispEdges" width="12" height="12" viewBox="0 0 12 12"><rect x="4" y="2" width="4" height="1" fill="#fff"/><rect x="3" y="3" width="6" height="1" fill="#fff"/><rect x="2" y="4" width="8" height="1" fill="#fff"/><rect x="2" y="5" width="8" height="1" fill="#fff"/><rect x="2" y="6" width="8" height="1" fill="#fff"/><rect x="2" y="7" width="8" height="1" fill="#fff"/><rect x="3" y="8" width="6" height="1" fill="#fff"/><rect x="4" y="9" width="4" height="1" fill="#fff"/><rect x="4" y="0" width="4" height="1" fill="#a0a0a0"/><rect x="2" y="1" width="2" height="1" fill="#a0a0a0"/><rect x="8" y="1" width="2" height="1" fill="#a0a0a0"/><rect x="1" y="2" width="1" height="1" fill="#a0a0a0"/><rect x="1" y="3" width="1" height="1" fill="#a0a0a0"/><rect x="0" y="4" width="1" height="1" fill="#a0a0a0"/><rect x="0" y="5" width="1" height="1" fill="#a0a0a0"/><rect x="0" y="6" width="1" height="1" fill="#a0a0a0"/><rect x="0" y="7" width="1" height="1" fill="#a0a0a0"/><rect x="1" y="8" width="1" height="1" fill="#a0a0a0"/><rect x="1" y="9" width="1" height="1" fill="#a0a0a0"/><rect x="4" y="1" width="4" height="1" fill="#696969"/><rect x="2" y="2" width="2" height="1" fill="#696969"/><rect x="8" y="2" width="2" height="1" fill="#696969"/><rect x="2" y="3" width="1" height="1" fill="#696969"/><rect x="1" y="4" width="1" height="1" fill="#696969"/><rect x="1" y="5" width="1" height="1" fill="#696969"/><rect x="1" y="6" width="1" height="1" fill="#696969"/><rect x="1" y="7" width="1" height="1" fill="#696969"/><rect x="2" y="8" width="1" height="1" fill="#696969"/><rect x="10" y="2" width="1" height="1" fill="#fff"/><rect x="10" y="3" width="1" height="1" fill="#fff"/><rect x="11" y="4" width="1" height="1" fill="#fff"/><rect x="11" y="5" width="1" height="1" fill="#fff"/><rect x="11" y="6" width="1" height="1" fill="#fff"/><rect x="11" y="7" width="1" height="1" fill="#fff"/><rect x="10" y="8" width="1" height="1" fill="#fff"/><rect x="10" y="9" width="1" height="1" fill="#fff"/><rect x="2" y="10" width="2" height="1" fill="#fff"/><rect x="8" y="10" width="2" height="1" fill="#fff"/><rect x="4" y="11" width="4" height="1" fill="#fff"/><rect x="9" y="3" width="1" height="1" fill="#e3e3e3"/><rect x="10" y="4" width="1" height="1" fill="#e3e3e3"/><rect x="10" y="5" width="1" height="1" fill="#e3e3e3"/><rect x="10" y="6" width="1" height="1" fill="#e3e3e3"/><rect x="10" y="7" width="1" height="1" fill="#e3e3e3"/><rect x="9" y="8" width="1" height="1" fill="#e3e3e3"/><rect x="2" y="9" width="2" height="1" fill="#e3e3e3"/><rect x="8" y="9" width="2" height="1" fill="#e3e3e3"/><rect x="4" y="10" width="4" height="1" fill="#e3e3e3"/></svg>
<svg style="position:absolute;left:408px;top:467px;shape-rendering:crispEdges" width="12" height="12" viewBox="0 0 12 12"><rect x="4" y="2" width="4" height="1" fill="#fff"/><rect x="3" y="3" width="6" height="1" fill="#fff"/><rect x="2" y="4" width="8" height="1" fill="#fff"/><rect x="2" y="5" width="8" height="1" fill="#fff"/><rect x="2" y="6" width="8" height="1" fill="#fff"/><rect x="2" y="7" width="8" height="1" fill="#fff"/><rect x="3" y="8" width="6" height="1" fill="#fff"/><rect x="4" y="9" width="4" height="1" fill="#fff"/><rect x="4" y="0" width="4" height="1" fill="#a0a0a0"/><rect x="2" y="1" width="2" height="1" fill="#a0a0a0"/><rect x="8" y="1" width="2" height="1" fill="#a0a0a0"/><rect x="1" y="2" width="1" height="1" fill="#a0a0a0"/><rect x="1" y="3" width="1" height="1" fill="#a0a0a0"/><rect x="0" y="4" width="1" height="1" fill="#a0a0a0"/><rect x="0" y="5" width="1" height="1" fill="#a0a0a0"/><rect x="0" y="6" width="1" height="1" fill="#a0a0a0"/><rect x="0" y="7" width="1" height="1" fill="#a0a0a0"/><rect x="1" y="8" width="1" height="1" fill="#a0a0a0"/><rect x="1" y="9" width="1" height="1" fill="#a0a0a0"/><rect x="4" y="1" width="4" height="1" fill="#696969"/><rect x="2" y="2" width="2" height="1" fill="#696969"/><rect x="8" y="2" width="2" height="1" fill="#696969"/><rect x="2" y="3" width="1" height="1" fill="#696969"/><rect x="1" y="4" width="1" height="1" fill="#696969"/><rect x="1" y="5" width="1" height="1" fill="#696969"/><rect x="1" y="6" width="1" height="1" fill="#696969"/><rect x="1" y="7" width="1" height="1" fill="#696969"/><rect x="2" y="8" width="1" height="1" fill="#696969"/><rect x="10" y="2" width="1" height="1" fill="#fff"/><rect x="10" y="3" width="1" height="1" fill="#fff"/><rect x="11" y="4" width="1" height="1" fill="#fff"/><rect x="11" y="5" width="1" height="1" fill="#fff"/><rect x="11" y="6" width="1" height="1" fill="#fff"/><rect x="11" y="7" width="1" height="1" fill="#fff"/><rect x="10" y="8" width="1" height="1" fill="#fff"/><rect x="10" y="9" width="1" height="1" fill="#fff"/><rect x="2" y="10" width="2" height="1" fill="#fff"/><rect x="8" y="10" width="2" height="1" fill="#fff"/><rect x="4" y="11" width="4" height="1" fill="#fff"/><rect x="9" y="3" width="1" height="1" fill="#e3e3e3"/><rect x="10" y="4" width="1" height="1" fill="#e3e3e3"/><rect x="10" y="5" width="1" height="1" fill="#e3e3e3"/><rect x="10" y="6" width="1" height="1" fill="#e3e3e3"/><rect x="10" y="7" width="1" height="1" fill="#e3e3e3"/><rect x="9" y="8" width="1" height="1" fill="#e3e3e3"/><rect x="2" y="9" width="2" height="1" fill="#e3e3e3"/><rect x="8" y="9" width="2" height="1" fill="#e3e3e3"/><rect x="4" y="10" width="4" height="1" fill="#e3e3e3"/></svg>
<svg style="position:absolute;left:408px;top:477px;shape-rendering:crispEdges" width="12" height="12" viewBox="0 0 12 12"><rect x="4" y="2" width="4" height="1" fill="#fff"/><rect x="3" y="3" width="6" height="1" fill="#fff"/><rect x="2" y="4" width="8" height="1" fill="#fff"/><rect x="2" y="5" width="8" height="1" fill="#fff"/><rect x="2" y="6" width="8" height="1" fill="#fff"/><rect x="2" y="7" width="8" height="1" fill="#fff"/><rect x="3" y="8" width="6" height="1" fill="#fff"/><rect x="4" y="9" width="4" height="1" fill="#fff"/><rect x="4" y="0" width="4" height="1" fill="#a0a0a0"/><rect x="2" y="1" width="2" height="1" fill="#a0a0a0"/><rect x="8" y="1" width="2" height="1" fill="#a0a0a0"/><rect x="1" y="2" width="1" height="1" fill="#a0a0a0"/><rect x="1" y="3" width="1" height="1" fill="#a0a0a0"/><rect x="0" y="4" width="1" height="1" fill="#a0a0a0"/><rect x="0" y="5" width="1" height="1" fill="#a0a0a0"/><rect x="0" y="6" width="1" height="1" fill="#a0a0a0"/><rect x="0" y="7" width="1" height="1" fill="#a0a0a0"/><rect x="1" y="8" width="1" height="1" fill="#a0a0a0"/><rect x="1" y="9" width="1" height="1" fill="#a0a0a0"/><rect x="4" y="1" width="4" height="1" fill="#696969"/><rect x="2" y="2" width="2" height="1" fill="#696969"/><rect x="8" y="2" width="2" height="1" fill="#696969"/><rect x="2" y="3" width="1" height="1" fill="#696969"/><rect x="1" y="4" width="1" height="1" fill="#696969"/><rect x="1" y="5" width="1" height="1" fill="#696969"/><rect x="1" y="6" width="1" height="1" fill="#696969"/><rect x="1" y="7" width="1" height="1" fill="#696969"/><rect x="2" y="8" width="1" height="1" fill="#696969"/><rect x="10" y="2" width="1" height="1" fill="#fff"/><rect x="10" y="3" width="1" height="1" fill="#fff"/><rect x="11" y="4" width="1" height="1" fill="#fff"/><rect x="11" y="5" width="1" height="1" fill="#fff"/><rect x="11" y="6" width="1" height="1" fill="#fff"/><rect x="11" y="7" width="1" height="1" fill="#fff"/><rect x="10" y="8" width="1" height="1" fill="#fff"/><rect x="10" y="9" width="1" height="1" fill="#fff"/><rect x="2" y="10" width="2" height="1" fill="#fff"/><rect x="8" y="10" width="2" height="1" fill="#fff"/><rect x="4" y="11" width="4" height="1" fill="#fff"/><rect x="9" y="3" width="1" height="1" fill="#e3e3e3"/><rect x="10" y="4" width="1" height="1" fill="#e3e3e3"/><rect x="10" y="5" width="1" height="1" fill="#e3e3e3"/><rect x="10" y="6" width="1" height="1" fill="#e3e3e3"/><rect x="10" y="7" width="1" height="1" fill="#e3e3e3"/><rect x="9" y="8" width="1" height="1" fill="#e3e3e3"/><rect x="2" y="9" width="2" height="1" fill="#e3e3e3"/><rect x="8" y="9" width="2" height="1" fill="#e3e3e3"/><rect x="4" y="10" width="4" height="1" fill="#e3e3e3"/></svg>
<svg style="position:absolute;left:408px;top:487px;shape-rendering:crispEdges" width="12" height="12" viewBox="0 0 12 12"><rect x="4" y="2" width="4" height="1" fill="#fff"/><rect x="3" y="3" width="6" height="1" fill="#fff"/><rect x="2" y="4" width="8" height="1" fill="#fff"/><rect x="2" y="5" width="8" height="1" fill="#fff"/><rect x="2" y="6" width="8" height="1" fill="#fff"/><rect x="2" y="7" width="8" height="1" fill="#fff"/><rect x="3" y="8" width="6" height="1" fill="#fff"/><rect x="4" y="9" width="4" height="1" fill="#fff"/><rect x="4" y="0" width="4" height="1" fill="#a0a0a0"/><rect x="2" y="1" width="2" height="1" fill="#a0a0a0"/><rect x="8" y="1" width="2" height="1" fill="#a0a0a0"/><rect x="1" y="2" width="1" height="1" fill="#a0a0a0"/><rect x="1" y="3" width="1" height="1" fill="#a0a0a0"/><rect x="0" y="4" width="1" height="1" fill="#a0a0a0"/><rect x="0" y="5" width="1" height="1" fill="#a0a0a0"/><rect x="0" y="6" width="1" height="1" fill="#a0a0a0"/><rect x="0" y="7" width="1" height="1" fill="#a0a0a0"/><rect x="1" y="8" width="1" height="1" fill="#a0a0a0"/><rect x="1" y="9" width="1" height="1" fill="#a0a0a0"/><rect x="4" y="1" width="4" height="1" fill="#696969"/><rect x="2" y="2" width="2" height="1" fill="#696969"/><rect x="8" y="2" width="2" height="1" fill="#696969"/><rect x="2" y="3" width="1" height="1" fill="#696969"/><rect x="1" y="4" width="1" height="1" fill="#696969"/><rect x="1" y="5" width="1" height="1" fill="#696969"/><rect x="1" y="6" width="1" height="1" fill="#696969"/><rect x="1" y="7" width="1" height="1" fill="#696969"/><rect x="2" y="8" width="1" height="1" fill="#696969"/><rect x="10" y="2" width="1" height="1" fill="#fff"/><rect x="10" y="3" width="1" height="1" fill="#fff"/><rect x="11" y="4" width="1" height="1" fill="#fff"/><rect x="11" y="5" width="1" height="1" fill="#fff"/><rect x="11" y="6" width="1" height="1" fill="#fff"/><rect x="11" y="7" width="1" height="1" fill="#fff"/><rect x="10" y="8" width="1" height="1" fill="#fff"/><rect x="10" y="9" width="1" height="1" fill="#fff"/><rect x="2" y="10" width="2" height="1" fill="#fff"/><rect x="8" y="10" width="2" height="1" fill="#fff"/><rect x="4" y="11" width="4" height="1" fill="#fff"/><rect x="9" y="3" width="1" height="1" fill="#e3e3e3"/><rect x="10" y="4" width="1" height="1" fill="#e3e3e3"/><rect x="10" y="5" width="1" height="1" fill="#e3e3e3"/><rect x="10" y="6" width="1" height="1" fill="#e3e3e3"/><rect x="10" y="7" width="1" height="1" fill="#e3e3e3"/><rect x="9" y="8" width="1" height="1" fill="#e3e3e3"/><rect x="2" y="9" width="2" height="1" fill="#e3e3e3"/><rect x="8" y="9" width="2" height="1" fill="#e3e3e3"/><rect x="4" y="10" width="4" height="1" fill="#e3e3e3"/></svg>
<svg style="position:absolute;left:408px;top:497px;shape-rendering:crispEdges" width="12" height="12" viewBox="0 0 12 12"><rect x="4" y="2" width="4" height="1" fill="#fff"/><rect x="3" y="3" width="6" height="1" fill="#fff"/><rect x="2" y="4" width="8" height="1" fill="#fff"/><rect x="2" y="5" width="8" height="1" fill="#fff"/><rect x="2" y="6" width="8" height="1" fill="#fff"/><rect x="2" y="7" width="8" height="1" fill="#fff"/><rect x="3" y="8" width="6" height="1" fill="#fff"/><rect x="4" y="9" width="4" height="1" fill="#fff"/><rect x="4" y="0" width="4" height="1" fill="#a0a0a0"/><rect x="2" y="1" width="2" height="1" fill="#a0a0a0"/><rect x="8" y="1" width="2" height="1" fill="#a0a0a0"/><rect x="1" y="2" width="1" height="1" fill="#a0a0a0"/><rect x="1" y="3" width="1" height="1" fill="#a0a0a0"/><rect x="0" y="4" width="1" height="1" fill="#a0a0a0"/><rect x="0" y="5" width="1" height="1" fill="#a0a0a0"/><rect x="0" y="6" width="1" height="1" fill="#a0a0a0"/><rect x="0" y="7" width="1" height="1" fill="#a0a0a0"/><rect x="1" y="8" width="1" height="1" fill="#a0a0a0"/><rect x="1" y="9" width="1" height="1" fill="#a0a0a0"/><rect x="4" y="1" width="4" height="1" fill="#696969"/><rect x="2" y="2" width="2" height="1" fill="#696969"/><rect x="8" y="2" width="2" height="1" fill="#696969"/><rect x="2" y="3" width="1" height="1" fill="#696969"/><rect x="1" y="4" width="1" height="1" fill="#696969"/><rect x="1" y="5" width="1" height="1" fill="#696969"/><rect x="1" y="6" width="1" height="1" fill="#696969"/><rect x="1" y="7" width="1" height="1" fill="#696969"/><rect x="2" y="8" width="1" height="1" fill="#696969"/><rect x="10" y="2" width="1" height="1" fill="#fff"/><rect x="10" y="3" width="1" height="1" fill="#fff"/><rect x="11" y="4" width="1" height="1" fill="#fff"/><rect x="11" y="5" width="1" height="1" fill="#fff"/><rect x="11" y="6" width="1" height="1" fill="#fff"/><rect x="11" y="7" width="1" height="1" fill="#fff"/><rect x="10" y="8" width="1" height="1" fill="#fff"/><rect x="10" y="9" width="1" height="1" fill="#fff"/><rect x="2" y="10" width="2" height="1" fill="#fff"/><rect x="8" y="10" width="2" height="1" fill="#fff"/><rect x="4" y="11" width="4" height="1" fill="#fff"/><rect x="9" y="3" width="1" height="1" fill="#e3e3e3"/><rect x="10" y="4" width="1" height="1" fill="#e3e3e3"/><rect x="10" y="5" width="1" height="1" fill="#e3e3e3"/><rect x="10" y="6" width="1" height="1" fill="#e3e3e3"/><rect x="10" y="7" width="1" height="1" fill="#e3e3e3"/><rect x="9" y="8" width="1" height="1" fill="#e3e3e3"/><rect x="2" y="9" width="2" height="1" fill="#e3e3e3"/><rect x="8" y="9" width="2" height="1" fill="#e3e3e3"/><rect x="4" y="10" width="4" height="1" fill="#e3e3e3"/></svg>
<svg style="position:absolute;left:408px;top:507px;shape-rendering:crispEdges" width="12" height="12" viewBox="0 0 12 12"><rect x="4" y="2" width="4" height="1" fill="#fff"/><rect x="3" y="3" width="6" height="1" fill="#fff"/><rect x="2" y="4" width="8" height="1" fill="#fff"/><rect x="2" y="5" width="8" height="1" fill="#fff"/><rect x="2" y="6" width="8" height="1" fill="#fff"/><rect x="2" y="7" width="8" height="1" fill="#fff"/><rect x="3" y="8" width="6" height="1" fill="#fff"/><rect x="4" y="9" width="4" height="1" fill="#fff"/><rect x="4" y="0" width="4" height="1" fill="#a0a0a0"/><rect x="2" y="1" width="2" height="1" fill="#a0a0a0"/><rect x="8" y="1" width="2" height="1" fill="#a0a0a0"/><rect x="1" y="2" width="1" height="1" fill="#a0a0a0"/><rect x="1" y="3" width="1" height="1" fill="#a0a0a0"/><rect x="0" y="4" width="1" height="1" fill="#a0a0a0"/><rect x="0" y="5" width="1" height="1" fill="#a0a0a0"/><rect x="0" y="6" width="1" height="1" fill="#a0a0a0"/><rect x="0" y="7" width="1" height="1" fill="#a0a0a0"/><rect x="1" y="8" width="1" height="1" fill="#a0a0a0"/><rect x="1" y="9" width="1" height="1" fill="#a0a0a0"/><rect x="4" y="1" width="4" height="1" fill="#696969"/><rect x="2" y="2" width="2" height="1" fill="#696969"/><rect x="8" y="2" width="2" height="1" fill="#696969"/><rect x="2" y="3" width="1" height="1" fill="#696969"/><rect x="1" y="4" width="1" height="1" fill="#696969"/><rect x="1" y="5" width="1" height="1" fill="#696969"/><rect x="1" y="6" width="1" height="1" fill="#696969"/><rect x="1" y="7" width="1" height="1" fill="#696969"/><rect x="2" y="8" width="1" height="1" fill="#696969"/><rect x="10" y="2" width="1" height="1" fill="#fff"/><rect x="10" y="3" width="1" height="1" fill="#fff"/><rect x="11" y="4" width="1" height="1" fill="#fff"/><rect x="11" y="5" width="1" height="1" fill="#fff"/><rect x="11" y="6" width="1" height="1" fill="#fff"/><rect x="11" y="7" width="1" height="1" fill="#fff"/><rect x="10" y="8" width="1" height="1" fill="#fff"/><rect x="10" y="9" width="1" height="1" fill="#fff"/><rect x="2" y="10" width="2" height="1" fill="#fff"/><rect x="8" y="10" width="2" height="1" fill="#fff"/><rect x="4" y="11" width="4" height="1" fill="#fff"/><rect x="9" y="3" width="1" height="1" fill="#e3e3e3"/><rect x="10" y="4" width="1" height="1" fill="#e3e3e3"/><rect x="10" y="5" width="1" height="1" fill="#e3e3e3"/><rect x="10" y="6" width="1" height="1" fill="#e3e3e3"/><rect x="10" y="7" width="1" height="1" fill="#e3e3e3"/><rect x="9" y="8" width="1" height="1" fill="#e3e3e3"/><rect x="2" y="9" width="2" height="1" fill="#e3e3e3"/><rect x="8" y="9" width="2" height="1" fill="#e3e3e3"/><rect x="4" y="10" width="4" height="1" fill="#e3e3e3"/></svg>
<svg style="position:absolute;left:408px;top:517px;shape-rendering:crispEdges" width="12" height="12" viewBox="0 0 12 12"><rect x="4" y="2" width="4" height="1" fill="#fff"/><rect x="3" y="3" width="6" height="1" fill="#fff"/><rect x="2" y="4" width="8" height="1" fill="#fff"/><rect x="2" y="5" width="8" height="1" fill="#fff"/><rect x="2" y="6" width="8" height="1" fill="#fff"/><rect x="2" y="7" width="8" height="1" fill="#fff"/><rect x="3" y="8" width="6" height="1" fill="#fff"/><rect x="4" y="9" width="4" height="1" fill="#fff"/><rect x="4" y="0" width="4" height="1" fill="#a0a0a0"/><rect x="2" y="1" width="2" height="1" fill="#a0a0a0"/><rect x="8" y="1" width="2" height="1" fill="#a0a0a0"/><rect x="1" y="2" width="1" height="1" fill="#a0a0a0"/><rect x="1" y="3" width="1" height="1" fill="#a0a0a0"/><rect x="0" y="4" width="1" height="1" fill="#a0a0a0"/><rect x="0" y="5" width="1" height="1" fill="#a0a0a0"/><rect x="0" y="6" width="1" height="1" fill="#a0a0a0"/><rect x="0" y="7" width="1" height="1" fill="#a0a0a0"/><rect x="1" y="8" width="1" height="1" fill="#a0a0a0"/><rect x="1" y="9" width="1" height="1" fill="#a0a0a0"/><rect x="4" y="1" width="4" height="1" fill="#696969"/><rect x="2" y="2" width="2" height="1" fill="#696969"/><rect x="8" y="2" width="2" height="1" fill="#696969"/><rect x="2" y="3" width="1" height="1" fill="#696969"/><rect x="1" y="4" width="1" height="1" fill="#696969"/><rect x="1" y="5" width="1" height="1" fill="#696969"/><rect x="1" y="6" width="1" height="1" fill="#696969"/><rect x="1" y="7" width="1" height="1" fill="#696969"/><rect x="2" y="8" width="1" height="1" fill="#696969"/><rect x="10" y="2" width="1" height="1" fill="#fff"/><rect x="10" y="3" width="1" height="1" fill="#fff"/><rect x="11" y="4" width="1" height="1" fill="#fff"/><rect x="11" y="5" width="1" height="1" fill="#fff"/><rect x="11" y="6" width="1" height="1" fill="#fff"/><rect x="11" y="7" width="1" height="1" fill="#fff"/><rect x="10" y="8" width="1" height="1" fill="#fff"/><rect x="10" y="9" width="1" height="1" fill="#fff"/><rect x="2" y="10" width="2" height="1" fill="#fff"/><rect x="8" y="10" width="2" height="1" fill="#fff"/><rect x="4" y="11" width="4" height="1" fill="#fff"/><rect x="9" y="3" width="1" height="1" fill="#e3e3e3"/><rect x="10" y="4" width="1" height="1" fill="#e3e3e3"/><rect x="10" y="5" width="1" height="1" fill="#e3e3e3"/><rect x="10" y="6" width="1" height="1" fill="#e3e3e3"/><rect x="10" y="7" width="1" height="1" fill="#e3e3e3"/><rect x="9" y="8" width="1" height="1" fill="#e3e3e3"/><rect x="2" y="9" width="2" height="1" fill="#e3e3e3"/><rect x="8" y="9" width="2" height="1" fill="#e3e3e3"/><rect x="4" y="10" width="4" height="1" fill="#e3e3e3"/></svg>
<svg style="position:absolute;left:408px;top:527px;shape-rendering:crispEdges" width="12" height="12" viewBox="0 0 12 12"><rect x="4" y="2" width="4" height="1" fill="#fff"/><rect x="3" y="3" width="6" height="1" fill="#fff"/><rect x="2" y="4" width="8" height="1" fill="#fff"/><rect x="2" y="5" width="8" height="1" fill="#fff"/><rect x="2" y="6" width="8" height="1" fill="#fff"/><rect x="2" y="7" width="8" height="1" fill="#fff"/><rect x="3" y="8" width="6" height="1" fill="#fff"/><rect x="4" y="9" width="4" height="1" fill="#fff"/><rect x="4" y="0" width="4" height="1" fill="#a0a0a0"/><rect x="2" y="1" width="2" height="1" fill="#a0a0a0"/><rect x="8" y="1" width="2" height="1" fill="#a0a0a0"/><rect x="1" y="2" width="1" height="1" fill="#a0a0a0"/><rect x="1" y="3" width="1" height="1" fill="#a0a0a0"/><rect x="0" y="4" width="1" height="1" fill="#a0a0a0"/><rect x="0" y="5" width="1" height="1" fill="#a0a0a0"/><rect x="0" y="6" width="1" height="1" fill="#a0a0a0"/><rect x="0" y="7" width="1" height="1" fill="#a0a0a0"/><rect x="1" y="8" width="1" height="1" fill="#a0a0a0"/><rect x="1" y="9" width="1" height="1" fill="#a0a0a0"/><rect x="4" y="1" width="4" height="1" fill="#696969"/><rect x="2" y="2" width="2" height="1" fill="#696969"/><rect x="8" y="2" width="2" height="1" fill="#696969"/><rect x="2" y="3" width="1" height="1" fill="#696969"/><rect x="1" y="4" width="1" height="1" fill="#696969"/><rect x="1" y="5" width="1" height="1" fill="#696969"/><rect x="1" y="6" width="1" height="1" fill="#696969"/><rect x="1" y="7" width="1" height="1" fill="#696969"/><rect x="2" y="8" width="1" height="1" fill="#696969"/><rect x="10" y="2" width="1" height="1" fill="#fff"/><rect x="10" y="3" width="1" height="1" fill="#fff"/><rect x="11" y="4" width="1" height="1" fill="#fff"/><rect x="11" y="5" width="1" height="1" fill="#fff"/><rect x="11" y="6" width="1" height="1" fill="#fff"/><rect x="11" y="7" width="1" height="1" fill="#fff"/><rect x="10" y="8" width="1" height="1" fill="#fff"/><rect x="10" y="9" width="1" height="1" fill="#fff"/><rect x="2" y="10" width="2" height="1" fill="#fff"/><rect x="8" y="10" width="2" height="1" fill="#fff"/><rect x="4" y="11" width="4" height="1" fill="#fff"/><rect x="9" y="3" width="1" height="1" fill="#e3e3e3"/><rect x="10" y="4" width="1" height="1" fill="#e3e3e3"/><rect x="10" y="5" width="1" height="1" fill="#e3e3e3"/><rect x="10" y="6" width="1" height="1" fill="#e3e3e3"/><rect x="10" y="7" width="1" height="1" fill="#e3e3e3"/><rect x="9" y="8" width="1" height="1" fill="#e3e3e3"/><rect x="2" y="9" width="2" height="1" fill="#e3e3e3"/><rect x="8" y="9" width="2" height="1" fill="#e3e3e3"/><rect x="4" y="10" width="4" height="1" fill="#e3e3e3"/></svg>
<svg style="position:absolute;left:408px;top:537px;shape-rendering:crispEdges" width="12" height="12" viewBox="0 0 12 12"><rect x="4" y="2" width="4" height="1" fill="#fff"/><rect x="3" y="3" width="6" height="1" fill="#fff"/><rect x="2" y="4" width="8" height="1" fill="#fff"/><rect x="2" y="5" width="8" height="1" fill="#fff"/><rect x="2" y="6" width="8" height="1" fill="#fff"/><rect x="2" y="7" width="8" height="1" fill="#fff"/><rect x="3" y="8" width="6" height="1" fill="#fff"/><rect x="4" y="9" width="4" height="1" fill="#fff"/><rect x="4" y="0" width="4" height="1" fill="#a0a0a0"/><rect x="2" y="1" width="2" height="1" fill="#a0a0a0"/><rect x="8" y="1" width="2" height="1" fill="#a0a0a0"/><rect x="1" y="2" width="1" height="1" fill="#a0a0a0"/><rect x="1" y="3" width="1" height="1" fill="#a0a0a0"/><rect x="0" y="4" width="1" height="1" fill="#a0a0a0"/><rect x="0" y="5" width="1" height="1" fill="#a0a0a0"/><rect x="0" y="6" width="1" height="1" fill="#a0a0a0"/><rect x="0" y="7" width="1" height="1" fill="#a0a0a0"/><rect x="1" y="8" width="1" height="1" fill="#a0a0a0"/><rect x="1" y="9" width="1" height="1" fill="#a0a0a0"/><rect x="4" y="1" width="4" height="1" fill="#696969"/><rect x="2" y="2" width="2" height="1" fill="#696969"/><rect x="8" y="2" width="2" height="1" fill="#696969"/><rect x="2" y="3" width="1" height="1" fill="#696969"/><rect x="1" y="4" width="1" height="1" fill="#696969"/><rect x="1" y="5" width="1" height="1" fill="#696969"/><rect x="1" y="6" width="1" height="1" fill="#696969"/><rect x="1" y="7" width="1" height="1" fill="#696969"/><rect x="2" y="8" width="1" height="1" fill="#696969"/><rect x="10" y="2" width="1" height="1" fill="#fff"/><rect x="10" y="3" width="1" height="1" fill="#fff"/><rect x="11" y="4" width="1" height="1" fill="#fff"/><rect x="11" y="5" width="1" height="1" fill="#fff"/><rect x="11" y="6" width="1" height="1" fill="#fff"/><rect x="11" y="7" width="1" height="1" fill="#fff"/><rect x="10" y="8" width="1" height="1" fill="#fff"/><rect x="10" y="9" width="1" height="1" fill="#fff"/><rect x="2" y="10" width="2" height="1" fill="#fff"/><rect x="8" y="10" width="2" height="1" fill="#fff"/><rect x="4" y="11" width="4" height="1" fill="#fff"/><rect x="9" y="3" width="1" height="1" fill="#e3e3e3"/><rect x="10" y="4" width="1" height="1" fill="#e3e3e3"/><rect x="10" y="5" width="1" height="1" fill="#e3e3e3"/><rect x="10" y="6" width="1" height="1" fill="#e3e3e3"/><rect x="10" y="7" width="1" height="1" fill="#e3e3e3"/><rect x="9" y="8" width="1" height="1" fill="#e3e3e3"/><rect x="2" y="9" width="2" height="1" fill="#e3e3e3"/><rect x="8" y="9" width="2" height="1" fill="#e3e3e3"/><rect x="4" y="10" width="4" height="1" fill="#e3e3e3"/></svg>
<svg style="position:absolute;left:408px;top:547px;shape-rendering:crispEdges" width="12" height="12" viewBox="0 0 12 12"><rect x="4" y="2" width="4" height="1" fill="#fff"/><rect x="3" y="3" width="6" height="1" fill="#fff"/><rect x="2" y="4" width="8" height="1" fill="#fff"/><rect x="2" y="5" width="8" height="1" fill="#fff"/><rect x="2" y="6" width="8" height="1" fill="#fff"/><rect x="2" y="7" width="8" height="1" fill="#fff"/><rect x="3" y="8" width="6" height="1" fill="#fff"/><rect x="4" y="9" width="4" height="1" fill="#fff"/><rect x="4" y="0" width="4" height="1" fill="#a0a0a0"/><rect x="2" y="1" width="2" height="1" fill="#a0a0a0"/><rect x="8" y="1" width="2" height="1" fill="#a0a0a0"/><rect x="1" y="2" width="1" height="1" fill="#a0a0a0"/><rect x="1" y="3" width="1" height="1" fill="#a0a0a0"/><rect x="0" y="4" width="1" height="1" fill="#a0a0a0"/><rect x="0" y="5" width="1" height="1" fill="#a0a0a0"/><rect x="0" y="6" width="1" height="1" fill="#a0a0a0"/><rect x="0" y="7" width="1" height="1" fill="#a0a0a0"/><rect x="1" y="8" width="1" height="1" fill="#a0a0a0"/><rect x="1" y="9" width="1" height="1" fill="#a0a0a0"/><rect x="4" y="1" width="4" height="1" fill="#696969"/><rect x="2" y="2" width="2" height="1" fill="#696969"/><rect x="8" y="2" width="2" height="1" fill="#696969"/><rect x="2" y="3" width="1" height="1" fill="#696969"/><rect x="1" y="4" width="1" height="1" fill="#696969"/><rect x="1" y="5" width="1" height="1" fill="#696969"/><rect x="1" y="6" width="1" height="1" fill="#696969"/><rect x="1" y="7" width="1" height="1" fill="#696969"/><rect x="2" y="8" width="1" height="1" fill="#696969"/><rect x="10" y="2" width="1" height="1" fill="#fff"/><rect x="10" y="3" width="1" height="1" fill="#fff"/><rect x="11" y="4" width="1" height="1" fill="#fff"/><rect x="11" y="5" width="1" height="1" fill="#fff"/><rect x="11" y="6" width="1" height="1" fill="#fff"/><rect x="11" y="7" width="1" height="1" fill="#fff"/><rect x="10" y="8" width="1" height="1" fill="#fff"/><rect x="10" y="9" width="1" height="1" fill="#fff"/><rect x="2" y="10" width="2" height="1" fill="#fff"/><rect x="8" y="10" width="2" height="1" fill="#fff"/><rect x="4" y="11" width="4" height="1" fill="#fff"/><rect x="9" y="3" width="1" height="1" fill="#e3e3e3"/><rect x="10" y="4" width="1" height="1" fill="#e3e3e3"/><rect x="10" y="5" width="1" height="1" fill="#e3e3e3"/><rect x="10" y="6" width="1" height="1" fill="#e3e3e3"/><rect x="10" y="7" width="1" height="1" fill="#e3e3e3"/><rect x="9" y="8" width="1" height="1" fill="#e3e3e3"/><rect x="2" y="9" width="2" height="1" fill="#e3e3e3"/><rect x="8" y="9" width="2" height="1" fill="#e3e3e3"/><rect x="4" y="10" width="4" height="1" fill="#e3e3e3"/></svg>
<div style="left:425px;top:416.44px;font:400 12px/12px 'Liberation Sans', sans-serif;color:#000;white-space:pre;transform:scaleX(0.876);transform-origin:0 0;">Ascii</div>
<div style="left:425px;top:426.44px;font:400 12px/12px 'Liberation Sans', sans-serif;color:#000;white-space:pre;transform:scaleX(0.876);transform-origin:0 0;">Ansi</div>
<div style="left:425px;top:436.44px;font:400 12px/12px 'Liberation Sans', sans-serif;color:#000;white-space:pre;transform:scaleX(0.876);transform-origin:0 0;">Hex[space]</div>
<div style="left:425px;top:446.44px;font:400 12px/12px 'Liberation Sans', sans-serif;color:#000;white-space:pre;transform:scaleX(0.876);transform-origin:0 0;">Hex + Ascii</div>
<div style="left:425px;top:456.44px;font:400 12px/12px 'Liberation Sans', sans-serif;color:#000;white-space:pre;transform:scaleX(0.876);transform-origin:0 0;">uint8</div>
<div style="left:425px;top:466.44px;font:400 12px/12px 'Liberation Sans', sans-serif;color:#000;white-space:pre;transform:scaleX(0.876);transform-origin:0 0;">int8</div>
<div style="left:425px;top:476.44px;font:400 12px/12px 'Liberation Sans', sans-serif;color:#000;white-space:pre;transform:scaleX(0.876);transform-origin:0 0;">Hex</div>
<div style="left:425px;top:486.44px;font:400 12px/12px 'Liberation Sans', sans-serif;color:#000;white-space:pre;transform:scaleX(0.876);transform-origin:0 0;">int16</div>
<div style="left:425px;top:496.44px;font:400 12px/12px 'Liberation Sans', sans-serif;color:#000;white-space:pre;transform:scaleX(0.876);transform-origin:0 0;">uint16</div>
<div style="left:425px;top:506.44px;font:400 12px/12px 'Liberation Sans', sans-serif;color:#000;white-space:pre;transform:scaleX(0.876);transform-origin:0 0;">Ascii</div>
<div style="left:425px;top:516.44px;font:400 12px/12px 'Liberation Sans', sans-serif;color:#000;white-space:pre;transform:scaleX(0.876);transform-origin:0 0;">Binary</div>
<div style="left:425px;top:526.44px;font:400 12px/12px 'Liberation Sans', sans-serif;color:#000;white-space:pre;transform:scaleX(0.876);transform-origin:0 0;">Nibble</div>
<div style="left:425px;top:536.44px;font:400 12px/12px 'Liberation Sans', sans-serif;color:#000;white-space:pre;transform:scaleX(0.876);transform-origin:0 0;">Float4</div>
<div style="left:425px;top:546.44px;font:400 12px/12px 'Liberation Sans', sans-serif;color:#000;white-space:pre;transform:scaleX(0.876);transform-origin:0 0;">Hex CSV</div>
<div style="left:497px;top:405px;width:12px;height:12px;background:#fff;border-style:solid;border-width:1px;border-color:#a0a0a0 #fff #fff #a0a0a0"></div>
<div style="left:498px;top:406px;width:10px;height:10px;border-style:solid;border-width:1px;border-color:#696969 #e3e3e3 #e3e3e3 #696969"></div>
<div style="left:516px;top:405.44px;font:400 12px/12px 'Liberation Sans', sans-serif;color:#000;white-space:pre;transform:scaleX(0.876);transform-origin:0 0;"><u>H</u>alf Duplex</div>
<div style="left:497px;top:419px;width:12px;height:12px;background:#fff;border-style:solid;border-width:1px;border-color:#a0a0a0 #fff #fff #a0a0a0"></div>
<div style="left:498px;top:420px;width:10px;height:10px;border-style:solid;border-width:1px;border-color:#696969 #e3e3e3 #e3e3e3 #696969"></div>
<div style="left:516px;top:420.44px;font:400 12px/12px 'Liberation Sans', sans-serif;color:#000;white-space:pre;transform:scaleX(0.876);transform-origin:0 0;">new<u>L</u>ine mode</div>
<div style="left:497px;top:433px;width:12px;height:12px;background:#fff;border-style:solid;border-width:1px;border-color:#a0a0a0 #fff #fff #a0a0a0"></div>
<div style="left:498px;top:434px;width:10px;height:10px;border-style:solid;border-width:1px;border-color:#696969 #e3e3e3 #e3e3e3 #696969"></div>
<div style="left:516px;top:434.44px;font:400 12px/12px 'Liberation Sans', sans-serif;color:#000;white-space:pre;transform:scaleX(0.876);transform-origin:0 0;"><u>I</u>nvert</div>
<div style="left:497px;top:448px;width:12px;height:12px;background:#f0f0f0;border-style:solid;border-width:1px;border-color:#a0a0a0 #fff #fff #a0a0a0"></div>
<div style="left:498px;top:449px;width:10px;height:10px;border-style:solid;border-width:1px;border-color:#696969 #e3e3e3 #e3e3e3 #696969"></div>
<svg style="position:absolute;left:500px;top:451px;shape-rendering:crispEdges" width="7" height="7" viewBox="0 0 7 7"><rect x="6" y="0" width="1" height="1" fill="#a0a0a0"/><rect x="5" y="1" width="2" height="1" fill="#a0a0a0"/><rect x="0" y="2" width="1" height="1" fill="#a0a0a0"/><rect x="4" y="2" width="3" height="1" fill="#a0a0a0"/><rect x="0" y="3" width="2" height="1" fill="#a0a0a0"/><rect x="3" y="3" width="3" height="1" fill="#a0a0a0"/><rect x="0" y="4" width="5" height="1" fill="#a0a0a0"/><rect x="1" y="5" width="3" height="1" fill="#a0a0a0"/><rect x="2" y="6" width="1" height="1" fill="#a0a0a0"/></svg>
<div style="left:516px;top:448.44px;font:400 12px/12px 'Liberation Sans', sans-serif;color:#a0a0a0;white-space:pre;transform:scaleX(0.876);transform-origin:0 0;text-shadow:1px 1px 0 #fff">Big <u>E</u>ndian</div>
<div style="left:553px;top:433px;width:12px;height:12px;background:#fff;border-style:solid;border-width:1px;border-color:#a0a0a0 #fff #fff #a0a0a0"></div>
<div style="left:554px;top:434px;width:10px;height:10px;border-style:solid;border-width:1px;border-color:#696969 #e3e3e3 #e3e3e3 #696969"></div>
<div style="left:571.3px;top:434.44px;font:400 12px/12px 'Liberation Sans', sans-serif;color:#000;white-space:pre;transform:scaleX(0.876);transform-origin:0 0;"><u>7</u>Bits</div>
<div style="left:495px;top:472px;width:125px;height:49px;border:1px solid #a0a0a0"></div>
<div style="left:496px;top:473px;width:125px;height:49px;border:1px solid #fff"></div>
<div style="left:503.6px;top:468.44px;font:400 12px/12px 'Liberation Sans', sans-serif;color:#000;white-space:pre;transform:scaleX(0.876);transform-origin:0 0;background:#f0f0f0;padding:0 1px 0 0">Data <u>F</u>rames</div>
<div style="left:511.6px;top:483.25px;font:400 13.5px/13.5px 'Liberation Sans', sans-serif;color:#000;white-space:pre;transform:scaleX(0.93);transform-origin:0 0">Bytes</div>
<div style="left:567px;top:479px;width:45px;height:21px;background:#fff;border-style:solid;border-width:1px;border-color:#a0a0a0 #fff #fff #a0a0a0"></div>
<div style="left:568px;top:480px;width:43px;height:19px;border-style:solid;border-width:1px;border-color:#696969 #e3e3e3 #e3e3e3 #696969"></div>
<div style="left:570.8px;top:483.44px;font:400 12px/12px 'Liberation Sans', sans-serif;color:#000;white-space:pre;transform:scaleX(0.876);transform-origin:0 0;">2</div>
<div style="left:595px;top:481px;width:15px;height:8px;background:#f0f0f0;border-style:solid;border-width:1px;border-color:#fff #696969 #696969 #fff"></div>
<div style="left:596px;top:482px;width:13px;height:6px;border-style:solid;border-width:1px;border-color:#f0f0f0 #a0a0a0 #a0a0a0 #f0f0f0"></div>
<div style="left:595px;top:488px;width:15px;height:10px;background:#f0f0f0;border-style:solid;border-width:1px;border-color:#fff #696969 #696969 #fff"></div>
<div style="left:596px;top:489px;width:13px;height:8px;border-style:solid;border-width:1px;border-color:#f0f0f0 #a0a0a0 #a0a0a0 #f0f0f0"></div>
<svg style="position:absolute;left:599px;top:484px;" width="8" height="5" viewBox="0 0 8 5"><path d="M3.5 0L7.5 4H-0.5Z" fill="#000"/></svg>
<svg style="position:absolute;left:599px;top:491px;" width="8" height="5" viewBox="0 0 8 5"><path d="M-0.5 0H7.5L3.5 4Z" fill="#000"/></svg>
<div style="left:514px;top:503px;width:12px;height:12px;background:#fff;border-style:solid;border-width:1px;border-color:#a0a0a0 #fff #fff #a0a0a0"></div>
<div style="left:515px;top:504px;width:10px;height:10px;border-style:solid;border-width:1px;border-color:#696969 #e3e3e3 #e3e3e3 #696969"></div>
<div style="left:532.6px;top:503.44px;font:400 12px/12px 'Liberation Sans', sans-serif;color:#000;white-space:pre;transform:scaleX(0.876);transform-origin:0 0;">Si<u>n</u>gle</div>
<div style="left:570px;top:503px;width:43px;height:14px;background:#f0f0f0;border-style:solid;border-width:1px;border-color:#fff #696969 #696969 #fff"></div>
<div style="left:571px;top:504px;width:41px;height:12px;border-style:solid;border-width:1px;border-color:#f0f0f0 #a0a0a0 #a0a0a0 #f0f0f0"></div>
<div style="left:580.8px;top:504.44px;font:400 12px/12px 'Liberation Sans', sans-serif;color:#000;white-space:pre;transform:scaleX(0.876);transform-origin:0 0;">Gulp</div>
<div style="left:497px;top:538px;width:74px;height:21px;background:#f0f0f0;border-style:solid;border-width:1px;border-color:#fff #696969 #696969 #fff"></div>
<div style="left:498px;top:539px;width:72px;height:19px;border-style:solid;border-width:1px;border-color:#f0f0f0 #a0a0a0 #a0a0a0 #f0f0f0"></div>
<div style="left:503px;top:542.44px;font:400 12px/12px 'Liberation Sans', sans-serif;color:#000;white-space:pre;transform:scaleX(0.876);transform-origin:0 0;">Terminal <u>F</u>ont</div>
<div style="left:581.8px;top:526.44px;font:400 12px/12px 'Liberation Sans', sans-serif;color:#000;white-space:pre;transform:scaleX(0.876);transform-origin:0 0;">Rows</div>
<div style="left:581px;top:538px;width:42px;height:21px;background:#fff;border-style:solid;border-width:1px;border-color:#a0a0a0 #fff #fff #a0a0a0"></div>
<div style="left:582px;top:539px;width:40px;height:19px;border-style:solid;border-width:1px;border-color:#696969 #e3e3e3 #e3e3e3 #696969"></div>
<div style="left:584.7px;top:543.44px;font:400 12px/12px 'Liberation Sans', sans-serif;color:#000;white-space:pre;transform:scaleX(0.876);transform-origin:0 0;">16</div>
<div style="left:606px;top:540px;width:15px;height:8px;background:#f0f0f0;border-style:solid;border-width:1px;border-color:#fff #696969 #696969 #fff"></div>
<div style="left:607px;top:541px;width:13px;height:6px;border-style:solid;border-width:1px;border-color:#f0f0f0 #a0a0a0 #a0a0a0 #f0f0f0"></div>
<div style="left:606px;top:547px;width:15px;height:10px;background:#f0f0f0;border-style:solid;border-width:1px;border-color:#fff #696969 #696969 #fff"></div>
<div style="left:607px;top:548px;width:13px;height:8px;border-style:solid;border-width:1px;border-color:#f0f0f0 #a0a0a0 #a0a0a0 #f0f0f0"></div>
<svg style="position:absolute;left:610px;top:543px;" width="8" height="5" viewBox="0 0 8 5"><path d="M3.5 0L7.5 4H-0.5Z" fill="#000"/></svg>
<svg style="position:absolute;left:610px;top:550px;" width="8" height="5" viewBox="0 0 8 5"><path d="M-0.5 0H7.5L3.5 4Z" fill="#000"/></svg>
<div style="left:640px;top:526.44px;font:400 12px/12px 'Liberation Sans', sans-serif;color:#000;white-space:pre;transform:scaleX(0.876);transform-origin:0 0;">Cols</div>
<div style="left:631px;top:537px;width:48px;height:21px;background:#fff;border-style:solid;border-width:1px;border-color:#a0a0a0 #fff #fff #a0a0a0"></div>
<div style="left:632px;top:538px;width:46px;height:19px;border-style:solid;border-width:1px;border-color:#696969 #e3e3e3 #e3e3e3 #696969"></div>
<div style="left:635px;top:541.44px;font:400 12px/12px 'Liberation Sans', sans-serif;color:#000;white-space:pre;transform:scaleX(0.876);transform-origin:0 0;">72</div>
<div style="left:662px;top:539px;width:15px;height:8px;background:#f0f0f0;border-style:solid;border-width:1px;border-color:#fff #696969 #696969 #fff"></div>
<div style="left:663px;top:540px;width:13px;height:6px;border-style:solid;border-width:1px;border-color:#f0f0f0 #a0a0a0 #a0a0a0 #f0f0f0"></div>
<div style="left:662px;top:546px;width:15px;height:10px;background:#f0f0f0;border-style:solid;border-width:1px;border-color:#fff #696969 #696969 #fff"></div>
<div style="left:663px;top:547px;width:13px;height:8px;border-style:solid;border-width:1px;border-color:#f0f0f0 #a0a0a0 #a0a0a0 #f0f0f0"></div>
<svg style="position:absolute;left:666px;top:542px;" width="8" height="5" viewBox="0 0 8 5"><path d="M3.5 0L7.5 4H-0.5Z" fill="#000"/></svg>
<svg style="position:absolute;left:666px;top:549px;" width="8" height="5" viewBox="0 0 8 5"><path d="M-0.5 0H7.5L3.5 4Z" fill="#000"/></svg>
<div style="left:687px;top:543px;width:12px;height:12px;background:#fff;border-style:solid;border-width:1px;border-color:#a0a0a0 #fff #fff #a0a0a0"></div>
<div style="left:688px;top:544px;width:10px;height:10px;border-style:solid;border-width:1px;border-color:#696969 #e3e3e3 #e3e3e3 #696969"></div>
<div style="left:705.4px;top:543.44px;font:400 12px/12px 'Liberation Sans', sans-serif;color:#000;white-space:pre;transform:scaleX(0.876);transform-origin:0 0;">Scrollback</div>
<div style="left:626px;top:404px;width:236px;height:117px;border:1px solid #a0a0a0"></div>
<div style="left:627px;top:405px;width:236px;height:117px;border:1px solid #fff"></div>
<div style="left:634.5px;top:400.44px;font:400 12px/12px 'Liberation Sans', sans-serif;color:#000;white-space:pre;transform:scaleX(0.876);transform-origin:0 0;background:#f0f0f0;padding:0 1px 0 0"><u>B</u>inary Sync Chars</div>
<div style="left:634px;top:415px;width:144px;height:20px;background:#fff;border-style:solid;border-width:1px;border-color:#a0a0a0 #fff #fff #a0a0a0"></div>
<div style="left:635px;top:416px;width:142px;height:18px;border-style:solid;border-width:1px;border-color:#696969 #e3e3e3 #e3e3e3 #696969"></div>
<div style="left:637px;top:419.44px;font:400 12px/12px 'Liberation Sans', sans-serif;color:#000;white-space:pre;transform:scaleX(0.876);transform-origin:0 0;">ABCD</div>
<div style="left:760px;top:417px;width:17px;height:17px;background:#f0f0f0;border-style:solid;border-width:1px;border-color:#fff #696969 #696969 #fff"></div>
<div style="left:761px;top:418px;width:15px;height:15px;border-style:solid;border-width:1px;border-color:#f0f0f0 #a0a0a0 #a0a0a0 #f0f0f0"></div>
<svg style="position:absolute;left:765px;top:424px;" width="8" height="5" viewBox="0 0 8 5"><path d="M0 0H8L4 4Z" fill="#000"/></svg>
<div style="left:634px;top:439px;width:144px;height:20px;background:#fff;border-style:solid;border-width:1px;border-color:#a0a0a0 #fff #fff #a0a0a0"></div>
<div style="left:635px;top:440px;width:142px;height:18px;border-style:solid;border-width:1px;border-color:#696969 #e3e3e3 #e3e3e3 #696969"></div>
<div style="left:760px;top:441px;width:17px;height:17px;background:#f0f0f0;border-style:solid;border-width:1px;border-color:#fff #696969 #696969 #fff"></div>
<div style="left:761px;top:442px;width:15px;height:15px;border-style:solid;border-width:1px;border-color:#f0f0f0 #a0a0a0 #a0a0a0 #f0f0f0"></div>
<svg style="position:absolute;left:765px;top:448px;" width="8" height="5" viewBox="0 0 8 5"><path d="M0 0H8L4 4Z" fill="#000"/></svg>
<div style="left:634px;top:463px;width:144px;height:20px;background:#fff;border-style:solid;border-width:1px;border-color:#a0a0a0 #fff #fff #a0a0a0"></div>
<div style="left:635px;top:464px;width:142px;height:18px;border-style:solid;border-width:1px;border-color:#696969 #e3e3e3 #e3e3e3 #696969"></div>
<div style="left:760px;top:465px;width:17px;height:17px;background:#f0f0f0;border-style:solid;border-width:1px;border-color:#fff #696969 #696969 #fff"></div>
<div style="left:761px;top:466px;width:15px;height:15px;border-style:solid;border-width:1px;border-color:#f0f0f0 #a0a0a0 #a0a0a0 #f0f0f0"></div>
<svg style="position:absolute;left:765px;top:472px;" width="8" height="5" viewBox="0 0 8 5"><path d="M0 0H8L4 4Z" fill="#000"/></svg>
<div style="left:787px;top:424.44px;font:400 12px/12px 'Liberation Sans', sans-serif;color:#000;white-space:pre;transform:scaleX(0.876);transform-origin:0 0;">Data</div>
<div style="left:785.7px;top:444.44px;font:400 12px/12px 'Liberation Sans', sans-serif;color:#000;white-space:pre;transform:scaleX(0.876);transform-origin:0 0;">XOR</div>
<div style="left:786px;top:468.44px;font:400 12px/12px 'Liberation Sans', sans-serif;color:#000;white-space:pre;transform:scaleX(0.876);transform-origin:0 0;">AND</div>
<div style="left:634px;top:489px;width:145px;height:25px;border:1px solid #696969"></div>
<div style="left:635px;top:490px;width:143px;height:23px;background:#f0f0f0;border-style:solid;border-width:1px;border-color:#fff #696969 #696969 #fff"></div>
<div style="left:636px;top:491px;width:141px;height:21px;border-style:solid;border-width:1px;border-color:#f0f0f0 #a0a0a0 #a0a0a0 #f0f0f0"></div>
<svg style="position:absolute;left:677px;top:493px;" width="18" height="16" viewBox="0 0 18 16"><path d="M2 8.5L6.5 13L16 3.5" fill="none" stroke="#000080" stroke-width="4.4" stroke-linejoin="miter"/><path d="M2 8.5L6.5 13L16 3.5" fill="none" stroke="#00b000" stroke-width="2.6"/></svg>
<div style="left:699.6px;top:495.44px;font:400 12px/12px 'Liberation Sans', sans-serif;color:#000;white-space:pre;transform:scaleX(0.876);transform-origin:0 0;"><u>C</u>hange</div>
<div style="left:802px;top:490px;width:12px;height:12px;background:#fff;border-style:solid;border-width:1px;border-color:#a0a0a0 #fff #fff #a0a0a0"></div>
<div style="left:803px;top:491px;width:10px;height:10px;border-style:solid;border-width:1px;border-color:#696969 #e3e3e3 #e3e3e3 #696969"></div>
<div style="left:820.6px;top:490.44px;font:400 12px/12px 'Liberation Sans', sans-serif;color:#000;white-space:pre;transform:scaleX(0.876);transform-origin:0 0;">Leading</div>
<div style="left:802.6px;top:505.44px;font:700 12px/12px 'Liberation Sans', sans-serif;color:#000;white-space:pre;">0</div>
<div style="left:834.8px;top:506.44px;font:400 12px/12px 'Liberation Sans', sans-serif;color:#000;white-space:pre;transform:scaleX(0.876);transform-origin:0 0;">matches</div>
<div style="left:818px;top:412px;width:59px;height:71px;border:1px solid #a0a0a0"></div>
<div style="left:819px;top:413px;width:59px;height:71px;border:1px solid #fff"></div>
<div style="left:826.6px;top:408.44px;font:400 12px/12px 'Liberation Sans', sans-serif;color:#000;white-space:pre;transform:scaleX(0.876);transform-origin:0 0;background:#f0f0f0;padding:0 1px 0 0"><u>S</u>ync is:</div>
<svg style="position:absolute;left:827px;top:424px;shape-rendering:crispEdges" width="12" height="12" viewBox="0 0 12 12"><rect x="4" y="2" width="4" height="1" fill="#fff"/><rect x="3" y="3" width="6" height="1" fill="#fff"/><rect x="2" y="4" width="8" height="1" fill="#fff"/><rect x="2" y="5" width="8" height="1" fill="#fff"/><rect x="2" y="6" width="8" height="1" fill="#fff"/><rect x="2" y="7" width="8" height="1" fill="#fff"/><rect x="3" y="8" width="6" height="1" fill="#fff"/><rect x="4" y="9" width="4" height="1" fill="#fff"/><rect x="4" y="0" width="4" height="1" fill="#a0a0a0"/><rect x="2" y="1" width="2" height="1" fill="#a0a0a0"/><rect x="8" y="1" width="2" height="1" fill="#a0a0a0"/><rect x="1" y="2" width="1" height="1" fill="#a0a0a0"/><rect x="1" y="3" width="1" height="1" fill="#a0a0a0"/><rect x="0" y="4" width="1" height="1" fill="#a0a0a0"/><rect x="0" y="5" width="1" height="1" fill="#a0a0a0"/><rect x="0" y="6" width="1" height="1" fill="#a0a0a0"/><rect x="0" y="7" width="1" height="1" fill="#a0a0a0"/><rect x="1" y="8" width="1" height="1" fill="#a0a0a0"/><rect x="1" y="9" width="1" height="1" fill="#a0a0a0"/><rect x="4" y="1" width="4" height="1" fill="#696969"/><rect x="2" y="2" width="2" height="1" fill="#696969"/><rect x="8" y="2" width="2" height="1" fill="#696969"/><rect x="2" y="3" width="1" height="1" fill="#696969"/><rect x="1" y="4" width="1" height="1" fill="#696969"/><rect x="1" y="5" width="1" height="1" fill="#696969"/><rect x="1" y="6" width="1" height="1" fill="#696969"/><rect x="1" y="7" width="1" height="1" fill="#696969"/><rect x="2" y="8" width="1" height="1" fill="#696969"/><rect x="10" y="2" width="1" height="1" fill="#fff"/><rect x="10" y="3" width="1" height="1" fill="#fff"/><rect x="11" y="4" width="1" height="1" fill="#fff"/><rect x="11" y="5" width="1" height="1" fill="#fff"/><rect x="11" y="6" width="1" height="1" fill="#fff"/><rect x="11" y="7" width="1" height="1" fill="#fff"/><rect x="10" y="8" width="1" height="1" fill="#fff"/><rect x="10" y="9" width="1" height="1" fill="#fff"/><rect x="2" y="10" width="2" height="1" fill="#fff"/><rect x="8" y="10" width="2" height="1" fill="#fff"/><rect x="4" y="11" width="4" height="1" fill="#fff"/><rect x="9" y="3" width="1" height="1" fill="#e3e3e3"/><rect x="10" y="4" width="1" height="1" fill="#e3e3e3"/><rect x="10" y="5" width="1" height="1" fill="#e3e3e3"/><rect x="10" y="6" width="1" height="1" fill="#e3e3e3"/><rect x="10" y="7" width="1" height="1" fill="#e3e3e3"/><rect x="9" y="8" width="1" height="1" fill="#e3e3e3"/><rect x="2" y="9" width="2" height="1" fill="#e3e3e3"/><rect x="8" y="9" width="2" height="1" fill="#e3e3e3"/><rect x="4" y="10" width="4" height="1" fill="#e3e3e3"/><rect x="5" y="3" width="2" height="1" fill="#000"/><rect x="4" y="4" width="4" height="1" fill="#000"/><rect x="4" y="5" width="4" height="1" fill="#000"/><rect x="5" y="6" width="2" height="1" fill="#000"/></svg>
<div style="left:845px;top:425.44px;font:400 12px/12px 'Liberation Sans', sans-serif;color:#000;white-space:pre;transform:scaleX(0.876);transform-origin:0 0;">None</div>
<svg style="position:absolute;left:827px;top:444px;shape-rendering:crispEdges" width="12" height="12" viewBox="0 0 12 12"><rect x="4" y="2" width="4" height="1" fill="#fff"/><rect x="3" y="3" width="6" height="1" fill="#fff"/><rect x="2" y="4" width="8" height="1" fill="#fff"/><rect x="2" y="5" width="8" height="1" fill="#fff"/><rect x="2" y="6" width="8" height="1" fill="#fff"/><rect x="2" y="7" width="8" height="1" fill="#fff"/><rect x="3" y="8" width="6" height="1" fill="#fff"/><rect x="4" y="9" width="4" height="1" fill="#fff"/><rect x="4" y="0" width="4" height="1" fill="#a0a0a0"/><rect x="2" y="1" width="2" height="1" fill="#a0a0a0"/><rect x="8" y="1" width="2" height="1" fill="#a0a0a0"/><rect x="1" y="2" width="1" height="1" fill="#a0a0a0"/><rect x="1" y="3" width="1" height="1" fill="#a0a0a0"/><rect x="0" y="4" width="1" height="1" fill="#a0a0a0"/><rect x="0" y="5" width="1" height="1" fill="#a0a0a0"/><rect x="0" y="6" width="1" height="1" fill="#a0a0a0"/><rect x="0" y="7" width="1" height="1" fill="#a0a0a0"/><rect x="1" y="8" width="1" height="1" fill="#a0a0a0"/><rect x="1" y="9" width="1" height="1" fill="#a0a0a0"/><rect x="4" y="1" width="4" height="1" fill="#696969"/><rect x="2" y="2" width="2" height="1" fill="#696969"/><rect x="8" y="2" width="2" height="1" fill="#696969"/><rect x="2" y="3" width="1" height="1" fill="#696969"/><rect x="1" y="4" width="1" height="1" fill="#696969"/><rect x="1" y="5" width="1" height="1" fill="#696969"/><rect x="1" y="6" width="1" height="1" fill="#696969"/><rect x="1" y="7" width="1" height="1" fill="#696969"/><rect x="2" y="8" width="1" height="1" fill="#696969"/><rect x="10" y="2" width="1" height="1" fill="#fff"/><rect x="10" y="3" width="1" height="1" fill="#fff"/><rect x="11" y="4" width="1" height="1" fill="#fff"/><rect x="11" y="5" width="1" height="1" fill="#fff"/><rect x="11" y="6" width="1" height="1" fill="#fff"/><rect x="11" y="7" width="1" height="1" fill="#fff"/><rect x="10" y="8" width="1" height="1" fill="#fff"/><rect x="10" y="9" width="1" height="1" fill="#fff"/><rect x="2" y="10" width="2" height="1" fill="#fff"/><rect x="8" y="10" width="2" height="1" fill="#fff"/><rect x="4" y="11" width="4" height="1" fill="#fff"/><rect x="9" y="3" width="1" height="1" fill="#e3e3e3"/><rect x="10" y="4" width="1" height="1" fill="#e3e3e3"/><rect x="10" y="5" width="1" height="1" fill="#e3e3e3"/><rect x="10" y="6" width="1" height="1" fill="#e3e3e3"/><rect x="10" y="7" width="1" height="1" fill="#e3e3e3"/><rect x="9" y="8" width="1" height="1" fill="#e3e3e3"/><rect x="2" y="9" width="2" height="1" fill="#e3e3e3"/><rect x="8" y="9" width="2" height="1" fill="#e3e3e3"/><rect x="4" y="10" width="4" height="1" fill="#e3e3e3"/></svg>
<div style="left:845px;top:445.44px;font:400 12px/12px 'Liberation Sans', sans-serif;color:#000;white-space:pre;transform:scaleX(0.876);transform-origin:0 0;">ASCII</div>
<svg style="position:absolute;left:827px;top:464px;shape-rendering:crispEdges" width="12" height="12" viewBox="0 0 12 12"><rect x="4" y="2" width="4" height="1" fill="#fff"/><rect x="3" y="3" width="6" height="1" fill="#fff"/><rect x="2" y="4" width="8" height="1" fill="#fff"/><rect x="2" y="5" width="8" height="1" fill="#fff"/><rect x="2" y="6" width="8" height="1" fill="#fff"/><rect x="2" y="7" width="8" height="1" fill="#fff"/><rect x="3" y="8" width="6" height="1" fill="#fff"/><rect x="4" y="9" width="4" height="1" fill="#fff"/><rect x="4" y="0" width="4" height="1" fill="#a0a0a0"/><rect x="2" y="1" width="2" height="1" fill="#a0a0a0"/><rect x="8" y="1" width="2" height="1" fill="#a0a0a0"/><rect x="1" y="2" width="1" height="1" fill="#a0a0a0"/><rect x="1" y="3" width="1" height="1" fill="#a0a0a0"/><rect x="0" y="4" width="1" height="1" fill="#a0a0a0"/><rect x="0" y="5" width="1" height="1" fill="#a0a0a0"/><rect x="0" y="6" width="1" height="1" fill="#a0a0a0"/><rect x="0" y="7" width="1" height="1" fill="#a0a0a0"/><rect x="1" y="8" width="1" height="1" fill="#a0a0a0"/><rect x="1" y="9" width="1" height="1" fill="#a0a0a0"/><rect x="4" y="1" width="4" height="1" fill="#696969"/><rect x="2" y="2" width="2" height="1" fill="#696969"/><rect x="8" y="2" width="2" height="1" fill="#696969"/><rect x="2" y="3" width="1" height="1" fill="#696969"/><rect x="1" y="4" width="1" height="1" fill="#696969"/><rect x="1" y="5" width="1" height="1" fill="#696969"/><rect x="1" y="6" width="1" height="1" fill="#696969"/><rect x="1" y="7" width="1" height="1" fill="#696969"/><rect x="2" y="8" width="1" height="1" fill="#696969"/><rect x="10" y="2" width="1" height="1" fill="#fff"/><rect x="10" y="3" width="1" height="1" fill="#fff"/><rect x="11" y="4" width="1" height="1" fill="#fff"/><rect x="11" y="5" width="1" height="1" fill="#fff"/><rect x="11" y="6" width="1" height="1" fill="#fff"/><rect x="11" y="7" width="1" height="1" fill="#fff"/><rect x="10" y="8" width="1" height="1" fill="#fff"/><rect x="10" y="9" width="1" height="1" fill="#fff"/><rect x="2" y="10" width="2" height="1" fill="#fff"/><rect x="8" y="10" width="2" height="1" fill="#fff"/><rect x="4" y="11" width="4" height="1" fill="#fff"/><rect x="9" y="3" width="1" height="1" fill="#e3e3e3"/><rect x="10" y="4" width="1" height="1" fill="#e3e3e3"/><rect x="10" y="5" width="1" height="1" fill="#e3e3e3"/><rect x="10" y="6" width="1" height="1" fill="#e3e3e3"/><rect x="10" y="7" width="1" height="1" fill="#e3e3e3"/><rect x="9" y="8" width="1" height="1" fill="#e3e3e3"/><rect x="2" y="9" width="2" height="1" fill="#e3e3e3"/><rect x="8" y="9" width="2" height="1" fill="#e3e3e3"/><rect x="4" y="10" width="4" height="1" fill="#e3e3e3"/></svg>
<div style="left:845px;top:465.44px;font:400 12px/12px 'Liberation Sans', sans-serif;color:#000;white-space:pre;transform:scaleX(0.876);transform-origin:0 0;">Number</div>
<div style="left:862px;top:398px;width:88px;height:170px;background:#f0f0f0"></div>
<div style="left:862px;top:406px;width:79px;height:156px;border:1px solid #a0a0a0"></div>
<div style="left:863px;top:407px;width:79px;height:156px;border:1px solid #fff"></div>
<div style="left:870.7px;top:402.44px;font:400 12px/12px 'Liberation Sans', sans-serif;color:#000;white-space:pre;transform:scaleX(0.876);transform-origin:0 0;background:#f0f0f0;padding:0 1px 0 0">Status</div>
<div style="left:870px;top:417px;width:13px;height:13px;border-style:solid;border-width:1px;border-color:#fff #808080 #808080 #fff"></div>
<div style="left:887px;top:418.44px;font:400 12px/12px 'Liberation Sans', sans-serif;color:#000;white-space:pre;transform:scaleX(0.876);transform-origin:0 0;">Connected</div>
<div style="left:870px;top:433px;width:13px;height:13px;border-style:solid;border-width:1px;border-color:#fff #808080 #808080 #fff"></div>
<div style="left:887px;top:434.44px;font:400 12px/12px 'Liberation Sans', sans-serif;color:#000;white-space:pre;transform:scaleX(0.876);transform-origin:0 0;">RXD (2)</div>
<div style="left:870px;top:449px;width:13px;height:13px;border-style:solid;border-width:1px;border-color:#fff #808080 #808080 #fff"></div>
<div style="left:887px;top:450.44px;font:400 12px/12px 'Liberation Sans', sans-serif;color:#000;white-space:pre;transform:scaleX(0.876);transform-origin:0 0;">TXD (3)</div>
<div style="left:870px;top:465px;width:13px;height:13px;border-style:solid;border-width:1px;border-color:#fff #808080 #808080 #fff"></div>
<div style="left:887px;top:466.44px;font:400 12px/12px 'Liberation Sans', sans-serif;color:#000;white-space:pre;transform:scaleX(0.876);transform-origin:0 0;">CTS (8)</div>
<div style="left:870px;top:481px;width:13px;height:13px;border-style:solid;border-width:1px;border-color:#fff #808080 #808080 #fff"></div>
<div style="left:887px;top:482.44px;font:400 12px/12px 'Liberation Sans', sans-serif;color:#000;white-space:pre;transform:scaleX(0.876);transform-origin:0 0;">DCD (1)</div>
<div style="left:870px;top:497px;width:13px;height:13px;border-style:solid;border-width:1px;border-color:#fff #808080 #808080 #fff"></div>
<div style="left:887px;top:498.44px;font:400 12px/12px 'Liberation Sans', sans-serif;color:#000;white-space:pre;transform:scaleX(0.876);transform-origin:0 0;">DSR (6)</div>
<div style="left:870px;top:513px;width:13px;height:13px;border-style:solid;border-width:1px;border-color:#fff #808080 #808080 #fff"></div>
<div style="left:887px;top:514.44px;font:400 12px/12px 'Liberation Sans', sans-serif;color:#000;white-space:pre;transform:scaleX(0.876);transform-origin:0 0;">Ring (9)</div>
<div style="left:870px;top:529px;width:13px;height:13px;border-style:solid;border-width:1px;border-color:#fff #808080 #808080 #fff"></div>
<div style="left:887px;top:530.44px;font:400 12px/12px 'Liberation Sans', sans-serif;color:#000;white-space:pre;transform:scaleX(0.876);transform-origin:0 0;">BREAK</div>
<div style="left:870px;top:545px;width:13px;height:13px;border-style:solid;border-width:1px;border-color:#fff #808080 #808080 #fff"></div>
<div style="left:887px;top:546.44px;font:400 12px/12px 'Liberation Sans', sans-serif;color:#000;white-space:pre;transform:scaleX(0.876);transform-origin:0 0;">Error</div>
<div style="left:395px;top:572px;width:350px;height:22px;border-style:solid;border-width:1px;border-color:#a0a0a0 #fff #fff #a0a0a0"></div>
<div style="left:747px;top:572px;width:118px;height:22px;border-style:solid;border-width:1px;border-color:#a0a0a0 #fff #fff #a0a0a0"></div>
<div style="left:867px;top:572px;width:68px;height:22px;border-style:solid;border-width:1px 0 1px 1px;border-color:#a0a0a0 #fff #fff #a0a0a0"></div>
<div style="left:937px;top:572px;width:15px;height:22px;border-style:solid;border-width:1px 1px 1px 0;border-color:#a0a0a0 #fff #fff #a0a0a0"></div>
<div style="left:397.5px;top:576.64px;font:400 12px/12px 'Liberation Sans', sans-serif;color:#000;white-space:pre;">You can use ActiveX automation to control me!</div>
<div style="left:749.3px;top:576.64px;font:400 12px/12px 'Liberation Sans', sans-serif;color:#000;white-space:pre;">Char Count:8</div>
<div style="left:869.8px;top:576.64px;font:400 12px/12px 'Liberation Sans', sans-serif;color:#000;white-space:pre;">CPS:0</div>
<svg style="position:absolute;left:938px;top:580px;" width="14" height="14" viewBox="0 0 14 14"><path d="M13 1L1 13M13 6L6 13M13 11L11 13" stroke="#a0a0a0" stroke-width="1.5"/><path d="M14 2L2 14M14 7L7 14" stroke="#fff" stroke-width="1"/></svg>
</body></html>
